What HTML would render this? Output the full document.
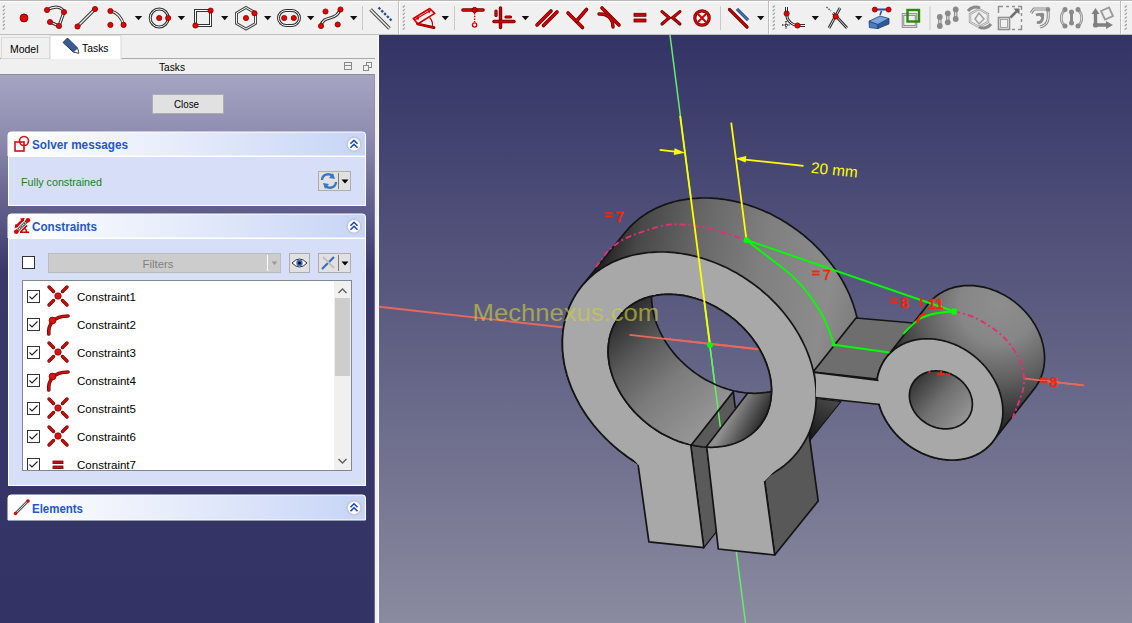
<!DOCTYPE html>
<html><head><meta charset="utf-8"><style>html,body{margin:0;padding:0;overflow:hidden;background:#f0f0f0}svg{display:block}</style></head>
<body><svg width="1132" height="623" viewBox="0 0 1132 623">
<defs>
<linearGradient id="taskg" x1="0" y1="74" x2="0" y2="623" gradientUnits="userSpaceOnUse">
<stop offset="0" stop-color="#a6a5c3"/><stop offset="0.11" stop-color="#8e8db0"/><stop offset="0.25" stop-color="#5e5c88"/><stop offset="0.36" stop-color="#3a3868"/><stop offset="1" stop-color="#333366"/>
</linearGradient>
<linearGradient id="hdrg" x1="0" y1="0" x2="1" y2="0">
<stop offset="0" stop-color="#ffffff"/><stop offset="0.45" stop-color="#e8edfb"/><stop offset="1" stop-color="#c6d4f6"/>
</linearGradient>
<linearGradient id="bgv" x1="0" y1="35" x2="0" y2="623" gradientUnits="userSpaceOnUse">
<stop offset="0" stop-color="#333366"/><stop offset="1" stop-color="#8a8aa0"/>
</linearGradient>
<linearGradient id="cylg" x1="585" y1="285" x2="860" y2="345" gradientUnits="userSpaceOnUse"><stop offset="0" stop-color="#141414"/><stop offset="0.06" stop-color="#2a2a2a"/><stop offset="0.15" stop-color="#484848"/><stop offset="0.35" stop-color="#666666"/><stop offset="0.6" stop-color="#808080"/><stop offset="0.85" stop-color="#8c8c8c"/><stop offset="1" stop-color="#7a7a7a"/></linearGradient>
<radialGradient id="cylg2" cx="998" cy="305" r="128" gradientUnits="userSpaceOnUse"><stop offset="0" stop-color="#8e8e8e"/><stop offset="0.3" stop-color="#868686"/><stop offset="0.6" stop-color="#5e5e5e"/><stop offset="0.85" stop-color="#353535"/><stop offset="1" stop-color="#222222"/></radialGradient>
<linearGradient id="inng" x1="612" y1="315" x2="710" y2="425" gradientUnits="userSpaceOnUse"><stop offset="0" stop-color="#262626"/><stop offset="0.3" stop-color="#585858"/><stop offset="0.6" stop-color="#7c7c7c"/><stop offset="1" stop-color="#969696"/></linearGradient>
<linearGradient id="inng2" x1="740" y1="396" x2="770" y2="412" gradientUnits="userSpaceOnUse"><stop offset="0" stop-color="#909090"/><stop offset="0.6" stop-color="#505050"/><stop offset="1" stop-color="#262626"/></linearGradient>
<linearGradient id="inng3" x1="912" y1="375" x2="968" y2="425" gradientUnits="userSpaceOnUse"><stop offset="0" stop-color="#2c2c2c"/><stop offset="0.5" stop-color="#707070"/><stop offset="1" stop-color="#9a9a9a"/></linearGradient>
<clipPath id="cE2"><path d="M648.2 424.3 L646.4 422.9 L644.6 421.4 L642.8 419.9 L641.1 418.3 L639.4 416.7 L637.7 415.1 L636.1 413.5 L634.5 411.8 L632.9 410.1 L631.4 408.4 L629.9 406.6 L628.5 404.8 L627.1 403.0 L625.8 401.2 L624.5 399.3 L623.2 397.5 L622.0 395.6 L620.8 393.7 L619.7 391.8 L618.6 389.8 L617.6 387.9 L616.6 385.9 L615.7 384.0 L614.8 382.0 L614.0 380.0 L613.2 378.0 L612.5 376.0 L611.9 374.0 L611.2 372.0 L610.7 370.0 L610.2 368.0 L609.7 366.0 L609.3 364.0 L609.0 362.0 L608.7 360.0 L608.5 358.1 L608.3 356.1 L608.2 354.1 L608.1 352.2 L608.1 350.2 L608.2 348.3 L608.3 346.4 L608.5 344.5 L608.7 342.7 L609.0 340.8 L609.3 339.0 L609.7 337.2 L610.1 335.4 L610.6 333.6 L611.2 331.9 L611.8 330.2 L612.4 328.5 L613.1 326.8 L613.9 325.2 L614.7 323.6 L615.6 322.1 L616.5 320.5 L617.5 319.0 L618.5 317.6 L619.5 316.2 L620.7 314.8 L621.8 313.4 L623.0 312.1 L624.3 310.9 L625.6 309.6 L626.9 308.5 L628.3 307.3 L629.7 306.2 L631.2 305.2 L632.7 304.2 L634.3 303.2 L635.8 302.3 L637.5 301.4 L639.1 300.6 L640.8 299.8 L642.5 299.1 L644.3 298.4 L646.1 297.8 L647.9 297.2 L649.8 296.7 L651.6 296.3 L653.5 295.8 L655.5 295.5 L657.4 295.1 L659.4 294.9 L661.4 294.7 L663.4 294.5 L665.4 294.4 L667.5 294.3 L669.6 294.3 L671.6 294.4 L673.7 294.5 L675.8 294.6 L677.9 294.8 L680.0 295.1 L682.2 295.4 L684.3 295.7 L686.4 296.2 L688.6 296.6 L690.7 297.1 L692.9 297.7 L695.0 298.3 L697.1 299.0 L699.2 299.7 L701.4 300.4 L703.5 301.3 L705.6 302.1 L707.7 303.0 L709.8 304.0 L711.8 305.0 L713.9 306.0 L715.9 307.1 L717.9 308.2 L719.9 309.4 L721.9 310.6 L723.8 311.9 L725.8 313.2 L727.7 314.5 L729.6 315.9 L731.4 317.3 L733.2 318.7 L735.0 320.2 L736.8 321.7 L738.5 323.3 L740.2 324.9 L741.9 326.5 L743.5 328.1 L745.1 329.8 L746.7 331.5 L748.2 333.2 L749.7 335.0 L751.1 336.8 L752.5 338.6 L753.8 340.4 L755.1 342.3 L756.4 344.1 L757.6 346.0 L758.8 347.9 L759.9 349.8 L761.0 351.8 L762.0 353.7 L763.0 355.7 L763.9 357.6 L764.8 359.6 L765.6 361.6 L766.4 363.6 L767.1 365.6 L767.7 367.6 L768.4 369.6 L768.9 371.6 L769.4 373.6 L769.9 375.6 L770.3 377.6 L770.6 379.6 L770.9 381.6 L771.1 383.5 L771.3 385.5 L771.4 387.5 L771.5 389.4 L771.5 391.4 L771.4 393.3 L771.3 395.2 L771.1 397.1 L770.9 398.9 L770.6 400.8 L770.3 402.6 L769.9 404.4 L769.5 406.2 L769.0 408.0 L768.4 409.7 L767.8 411.4 L767.2 413.1 L766.5 414.8 L765.7 416.4 L764.9 418.0 L764.0 419.5 L763.1 421.1 L762.1 422.6 L761.1 424.0 L760.1 425.4 L758.9 426.8 L757.8 428.2 L756.6 429.5 L755.3 430.7 L754.0 432.0 L752.7 433.1 L751.3 434.3 L749.9 435.4 L748.4 436.4 L746.9 437.4 L745.3 438.4 L743.8 439.3 L742.1 440.2 L740.5 441.0 L738.8 441.8 L737.1 442.5 L735.3 443.2 L733.5 443.8 L731.7 444.4 L729.8 444.9 L728.0 445.3 L726.1 445.8 L724.1 446.1 L722.2 446.5 L720.2 446.7 L718.2 446.9 L716.2 447.1 L714.2 447.2 L712.1 447.3 L710.0 447.3 L708.0 447.2 L705.9 447.1 L703.8 447.0 L701.7 446.8 L699.6 446.5 L697.4 446.2 L695.3 445.9 L693.2 445.4 L691.0 445.0 L688.9 444.5 L686.7 443.9 L684.6 443.3 L682.5 442.6 L680.4 441.9 L678.2 441.2 L676.1 440.3 L674.0 439.5 L671.9 438.6 L669.8 437.6 L667.8 436.6 L665.7 435.6 L663.7 434.5 L661.7 433.4 L659.7 432.2 L657.7 431.0 L655.8 429.7 L653.8 428.4 L651.9 427.1 L650.0 425.7 Z"/></clipPath>
<clipPath id="cE4"><path d="M691.7 370.3 L689.9 368.9 L688.1 367.4 L686.3 365.9 L684.6 364.3 L682.9 362.7 L681.2 361.1 L679.6 359.5 L678.0 357.8 L676.4 356.1 L674.9 354.4 L673.4 352.6 L672.0 350.8 L670.6 349.0 L669.3 347.2 L668.0 345.3 L666.7 343.5 L665.5 341.6 L664.3 339.7 L663.2 337.8 L662.1 335.8 L661.1 333.9 L660.1 331.9 L659.2 330.0 L658.3 328.0 L657.5 326.0 L656.7 324.0 L656.0 322.0 L655.4 320.0 L654.7 318.0 L654.2 316.0 L653.7 314.0 L653.2 312.0 L652.8 310.0 L652.5 308.0 L652.2 306.0 L652.0 304.1 L651.8 302.1 L651.7 300.1 L651.6 298.2 L651.6 296.2 L651.7 294.3 L651.8 292.4 L652.0 290.5 L652.2 288.7 L652.5 286.8 L652.8 285.0 L653.2 283.2 L653.6 281.4 L654.1 279.6 L654.7 277.9 L655.3 276.2 L655.9 274.5 L656.6 272.8 L657.4 271.2 L658.2 269.6 L659.1 268.1 L660.0 266.5 L661.0 265.0 L662.0 263.6 L663.0 262.2 L664.2 260.8 L665.3 259.4 L666.5 258.1 L667.8 256.9 L669.1 255.6 L670.4 254.5 L671.8 253.3 L673.2 252.2 L674.7 251.2 L676.2 250.2 L677.8 249.2 L679.3 248.3 L681.0 247.4 L682.6 246.6 L684.3 245.8 L686.0 245.1 L687.8 244.4 L689.6 243.8 L691.4 243.2 L693.3 242.7 L695.1 242.3 L697.0 241.8 L699.0 241.5 L700.9 241.1 L702.9 240.9 L704.9 240.7 L706.9 240.5 L708.9 240.4 L711.0 240.3 L713.1 240.3 L715.1 240.4 L717.2 240.5 L719.3 240.6 L721.4 240.8 L723.5 241.1 L725.7 241.4 L727.8 241.7 L729.9 242.2 L732.1 242.6 L734.2 243.1 L736.4 243.7 L738.5 244.3 L740.6 245.0 L742.7 245.7 L744.9 246.4 L747.0 247.3 L749.1 248.1 L751.2 249.0 L753.3 250.0 L755.3 251.0 L757.4 252.0 L759.4 253.1 L761.4 254.2 L763.4 255.4 L765.4 256.6 L767.3 257.9 L769.3 259.2 L771.2 260.5 L773.1 261.9 L774.9 263.3 L776.7 264.7 L778.5 266.2 L780.3 267.7 L782.0 269.3 L783.7 270.9 L785.4 272.5 L787.0 274.1 L788.6 275.8 L790.2 277.5 L791.7 279.2 L793.2 281.0 L794.6 282.8 L796.0 284.6 L797.3 286.4 L798.6 288.3 L799.9 290.1 L801.1 292.0 L802.3 293.9 L803.4 295.8 L804.5 297.8 L805.5 299.7 L806.5 301.7 L807.4 303.6 L808.3 305.6 L809.1 307.6 L809.9 309.6 L810.6 311.6 L811.2 313.6 L811.9 315.6 L812.4 317.6 L812.9 319.6 L813.4 321.6 L813.8 323.6 L814.1 325.6 L814.4 327.6 L814.6 329.5 L814.8 331.5 L814.9 333.5 L815.0 335.4 L815.0 337.4 L814.9 339.3 L814.8 341.2 L814.6 343.1 L814.4 344.9 L814.1 346.8 L813.8 348.6 L813.4 350.4 L813.0 352.2 L812.5 354.0 L811.9 355.7 L811.3 357.4 L810.7 359.1 L810.0 360.8 L809.2 362.4 L808.4 364.0 L807.5 365.5 L806.6 367.1 L805.6 368.6 L804.6 370.0 L803.6 371.4 L802.4 372.8 L801.3 374.2 L800.1 375.5 L798.8 376.7 L797.5 378.0 L796.2 379.1 L794.8 380.3 L793.4 381.4 L791.9 382.4 L790.4 383.4 L788.8 384.4 L787.3 385.3 L785.6 386.2 L784.0 387.0 L782.3 387.8 L780.6 388.5 L778.8 389.2 L777.0 389.8 L775.2 390.4 L773.3 390.9 L771.5 391.3 L769.6 391.8 L767.6 392.1 L765.7 392.5 L763.7 392.7 L761.7 392.9 L759.7 393.1 L757.7 393.2 L755.6 393.3 L753.5 393.3 L751.5 393.2 L749.4 393.1 L747.3 393.0 L745.2 392.8 L743.1 392.5 L740.9 392.2 L738.8 391.9 L736.7 391.4 L734.5 391.0 L732.4 390.5 L730.2 389.9 L728.1 389.3 L726.0 388.6 L723.9 387.9 L721.7 387.2 L719.6 386.3 L717.5 385.5 L715.4 384.6 L713.3 383.6 L711.3 382.6 L709.2 381.6 L707.2 380.5 L705.2 379.4 L703.2 378.2 L701.2 377.0 L699.3 375.7 L697.3 374.4 L695.4 373.1 L693.5 371.7 Z"/></clipPath>
<clipPath id="cE6"><path d="M926.9 423.7 L926.2 423.3 L925.5 422.8 L924.8 422.3 L924.1 421.8 L923.4 421.3 L922.7 420.8 L922.0 420.3 L921.4 419.7 L920.7 419.2 L920.1 418.6 L919.5 418.0 L918.9 417.4 L918.3 416.8 L917.8 416.2 L917.2 415.6 L916.7 414.9 L916.2 414.3 L915.7 413.6 L915.2 412.9 L914.7 412.2 L914.3 411.6 L913.8 410.9 L913.4 410.1 L913.0 409.4 L912.6 408.7 L912.3 408.0 L912.0 407.3 L911.6 406.5 L911.4 405.8 L911.1 405.0 L910.8 404.3 L910.6 403.5 L910.4 402.8 L910.2 402.0 L910.0 401.3 L909.9 400.5 L909.7 399.7 L909.6 399.0 L909.6 398.2 L909.5 397.5 L909.4 396.7 L909.4 396.0 L909.4 395.2 L909.5 394.5 L909.5 393.7 L909.6 393.0 L909.7 392.2 L909.8 391.5 L909.9 390.8 L910.0 390.1 L910.2 389.4 L910.4 388.7 L910.6 388.0 L910.9 387.3 L911.1 386.6 L911.4 385.9 L911.7 385.3 L912.0 384.6 L912.3 384.0 L912.7 383.4 L913.1 382.7 L913.5 382.1 L913.9 381.5 L914.3 381.0 L914.8 380.4 L915.2 379.8 L915.7 379.3 L916.2 378.8 L916.7 378.3 L917.3 377.8 L917.8 377.3 L918.4 376.8 L919.0 376.4 L919.6 375.9 L920.2 375.5 L920.8 375.1 L921.5 374.7 L922.1 374.3 L922.8 374.0 L923.5 373.7 L924.1 373.4 L924.9 373.1 L925.6 372.8 L926.3 372.5 L927.0 372.3 L927.8 372.1 L928.5 371.9 L929.3 371.7 L930.1 371.5 L930.8 371.4 L931.6 371.2 L932.4 371.1 L933.2 371.1 L934.0 371.0 L934.8 370.9 L935.6 370.9 L936.4 370.9 L937.3 370.9 L938.1 371.0 L938.9 371.0 L939.7 371.1 L940.5 371.2 L941.4 371.3 L942.2 371.4 L943.0 371.6 L943.8 371.7 L944.7 371.9 L945.5 372.1 L946.3 372.4 L947.1 372.6 L947.9 372.9 L948.7 373.2 L949.5 373.5 L950.3 373.8 L951.1 374.1 L951.8 374.5 L952.6 374.9 L953.4 375.3 L954.1 375.7 L954.9 376.1 L955.6 376.5 L956.3 377.0 L957.0 377.5 L957.7 378.0 L958.4 378.5 L959.1 379.0 L959.8 379.5 L960.4 380.1 L961.1 380.6 L961.7 381.2 L962.3 381.8 L962.9 382.4 L963.5 383.0 L964.0 383.6 L964.6 384.2 L965.1 384.9 L965.6 385.5 L966.1 386.2 L966.6 386.9 L967.1 387.6 L967.5 388.2 L968.0 388.9 L968.4 389.7 L968.8 390.4 L969.2 391.1 L969.5 391.8 L969.8 392.5 L970.2 393.3 L970.4 394.0 L970.7 394.8 L971.0 395.5 L971.2 396.3 L971.4 397.0 L971.6 397.8 L971.8 398.5 L971.9 399.3 L972.1 400.1 L972.2 400.8 L972.2 401.6 L972.3 402.3 L972.4 403.1 L972.4 403.8 L972.4 404.6 L972.3 405.3 L972.3 406.1 L972.2 406.8 L972.1 407.6 L972.0 408.3 L971.9 409.0 L971.8 409.7 L971.6 410.4 L971.4 411.1 L971.2 411.8 L970.9 412.5 L970.7 413.2 L970.4 413.9 L970.1 414.5 L969.8 415.2 L969.5 415.8 L969.1 416.4 L968.7 417.1 L968.3 417.7 L967.9 418.3 L967.5 418.8 L967.0 419.4 L966.6 420.0 L966.1 420.5 L965.6 421.0 L965.1 421.5 L964.5 422.0 L964.0 422.5 L963.4 423.0 L962.8 423.4 L962.2 423.9 L961.6 424.3 L961.0 424.7 L960.3 425.1 L959.7 425.5 L959.0 425.8 L958.3 426.1 L957.7 426.4 L956.9 426.7 L956.2 427.0 L955.5 427.3 L954.8 427.5 L954.0 427.7 L953.3 427.9 L952.5 428.1 L951.7 428.3 L951.0 428.4 L950.2 428.6 L949.4 428.7 L948.6 428.7 L947.8 428.8 L947.0 428.9 L946.2 428.9 L945.4 428.9 L944.5 428.9 L943.7 428.8 L942.9 428.8 L942.1 428.7 L941.3 428.6 L940.4 428.5 L939.6 428.4 L938.8 428.2 L938.0 428.1 L937.1 427.9 L936.3 427.7 L935.5 427.4 L934.7 427.2 L933.9 426.9 L933.1 426.6 L932.3 426.3 L931.5 426.0 L930.7 425.7 L930.0 425.3 L929.2 424.9 L928.4 424.5 L927.7 424.1 Z"/></clipPath>
<clipPath id="cvp"><rect x="379" y="35" width="753" height="588"/></clipPath>
</defs>
<rect x="0" y="0" width="1132" height="35" fill="#f0f0f0"/>
<rect x="0" y="0" width="1132" height="1" fill="#b8b8b8"/><rect x="0" y="1" width="1132" height="1" fill="#ffffff"/>
<rect x="0" y="34" width="1132" height="1" fill="#bfbfbf"/>
<rect x="398" y="1" width="1" height="33" fill="#bdbdbd"/><rect x="399" y="1" width="1" height="33" fill="#ffffff"/>
<rect x="768" y="1" width="1" height="33" fill="#bdbdbd"/><rect x="769" y="1" width="1" height="33" fill="#ffffff"/>
<rect x="1120" y="1" width="1" height="33" fill="#bdbdbd"/><rect x="1121" y="1" width="1" height="33" fill="#ffffff"/>
<path d="M2.8 7.5 L4.8 5.5" stroke="#a0a0a0" stroke-width="1.2"/><path d="M2.8 11.2 L4.8 9.2" stroke="#a0a0a0" stroke-width="1.2"/><path d="M2.8 14.9 L4.8 12.9" stroke="#a0a0a0" stroke-width="1.2"/><path d="M2.8 18.6 L4.8 16.6" stroke="#a0a0a0" stroke-width="1.2"/><path d="M2.8 22.3 L4.8 20.3" stroke="#a0a0a0" stroke-width="1.2"/><path d="M2.8 26.0 L4.8 24.0" stroke="#a0a0a0" stroke-width="1.2"/><path d="M2.8 29.700000000000003 L4.8 27.700000000000003" stroke="#a0a0a0" stroke-width="1.2"/>
<path d="M402.8 7.5 L404.8 5.5" stroke="#a0a0a0" stroke-width="1.2"/><path d="M402.8 11.2 L404.8 9.2" stroke="#a0a0a0" stroke-width="1.2"/><path d="M402.8 14.9 L404.8 12.9" stroke="#a0a0a0" stroke-width="1.2"/><path d="M402.8 18.6 L404.8 16.6" stroke="#a0a0a0" stroke-width="1.2"/><path d="M402.8 22.3 L404.8 20.3" stroke="#a0a0a0" stroke-width="1.2"/><path d="M402.8 26.0 L404.8 24.0" stroke="#a0a0a0" stroke-width="1.2"/><path d="M402.8 29.700000000000003 L404.8 27.700000000000003" stroke="#a0a0a0" stroke-width="1.2"/>
<path d="M772.8 7.5 L774.8 5.5" stroke="#a0a0a0" stroke-width="1.2"/><path d="M772.8 11.2 L774.8 9.2" stroke="#a0a0a0" stroke-width="1.2"/><path d="M772.8 14.9 L774.8 12.9" stroke="#a0a0a0" stroke-width="1.2"/><path d="M772.8 18.6 L774.8 16.6" stroke="#a0a0a0" stroke-width="1.2"/><path d="M772.8 22.3 L774.8 20.3" stroke="#a0a0a0" stroke-width="1.2"/><path d="M772.8 26.0 L774.8 24.0" stroke="#a0a0a0" stroke-width="1.2"/><path d="M772.8 29.700000000000003 L774.8 27.700000000000003" stroke="#a0a0a0" stroke-width="1.2"/>
<path d="M1124.8 7.5 L1126.8 5.5" stroke="#a0a0a0" stroke-width="1.2"/><path d="M1124.8 11.2 L1126.8 9.2" stroke="#a0a0a0" stroke-width="1.2"/><path d="M1124.8 14.9 L1126.8 12.9" stroke="#a0a0a0" stroke-width="1.2"/><path d="M1124.8 18.6 L1126.8 16.6" stroke="#a0a0a0" stroke-width="1.2"/><path d="M1124.8 22.3 L1126.8 20.3" stroke="#a0a0a0" stroke-width="1.2"/><path d="M1124.8 26.0 L1126.8 24.0" stroke="#a0a0a0" stroke-width="1.2"/><path d="M1124.8 29.700000000000003 L1126.8 27.700000000000003" stroke="#a0a0a0" stroke-width="1.2"/>
<circle cx="24" cy="18" r="4" fill="#e00000" stroke="#900000" stroke-width="0.8"/>
<path d="M47 10 C55 5 62 7 64 12 L59 26 L50 22" fill="none" stroke="#303030" stroke-width="3.2" stroke-linecap="butt"/><path d="M47 10 C55 5 62 7 64 12 L59 26 L50 22" fill="none" stroke="#f4f4f4" stroke-width="1.2000000000000002"/>
<circle cx="47" cy="10" r="2.6" fill="#e00000" stroke="#8a0000" stroke-width="0.8"/><circle cx="64" cy="12" r="2.6" fill="#e00000" stroke="#8a0000" stroke-width="0.8"/><circle cx="59" cy="26" r="2.6" fill="#e00000" stroke="#8a0000" stroke-width="0.8"/><circle cx="50" cy="22" r="2.6" fill="#e00000" stroke="#8a0000" stroke-width="0.8"/>
<path d="M77.5 26.5 L95 9" fill="none" stroke="#303030" stroke-width="3.2" stroke-linecap="butt"/><path d="M77.5 26.5 L95 9" fill="none" stroke="#f4f4f4" stroke-width="1.2000000000000002"/>
<circle cx="77.5" cy="26.5" r="2.6" fill="#e00000" stroke="#8a0000" stroke-width="0.8"/><circle cx="95" cy="9" r="2.6" fill="#e00000" stroke="#8a0000" stroke-width="0.8"/>
<path d="M110.4 11 C117 12 122 18 123.6 25" fill="none" stroke="#303030" stroke-width="3.2" stroke-linecap="butt"/><path d="M110.4 11 C117 12 122 18 123.6 25" fill="none" stroke="#f4f4f4" stroke-width="1.2000000000000002"/>
<circle cx="110.4" cy="11" r="2.6" fill="#e00000" stroke="#8a0000" stroke-width="0.8"/><circle cx="110.4" cy="24.9" r="2.6" fill="#e00000" stroke="#8a0000" stroke-width="0.8"/><circle cx="123.6" cy="24.9" r="2.6" fill="#e00000" stroke="#8a0000" stroke-width="0.8"/>
<path d="M134.8 16 h7.4 l-3.7 4.2 z" fill="#101010"/>
<circle cx="159.2" cy="18" r="9" fill="none" stroke="#303030" stroke-width="3"/><circle cx="159.2" cy="18" r="9" fill="none" stroke="#f4f4f4" stroke-width="1"/>
<circle cx="159.2" cy="18" r="2.6" fill="#e00000" stroke="#8a0000" stroke-width="0.8"/><circle cx="168.2" cy="18" r="2.6" fill="#e00000" stroke="#8a0000" stroke-width="0.8"/>
<path d="M177.7 16 h7.4 l-3.7 4.2 z" fill="#101010"/>
<rect x="194.5" y="9.5" width="17" height="17" fill="none" stroke="#333" stroke-width="1"/><rect x="196.5" y="11.5" width="13" height="13" fill="none" stroke="#333" stroke-width="1"/><rect x="195.5" y="10.5" width="15" height="15" fill="none" stroke="#fafafa" stroke-width="1"/>
<circle cx="210.6" cy="10.6" r="2.6" fill="#e00000" stroke="#8a0000" stroke-width="0.8"/><circle cx="195.4" cy="25.5" r="2.6" fill="#e00000" stroke="#8a0000" stroke-width="0.8"/>
<path d="M221 16 h7.4 l-3.7 4.2 z" fill="#101010"/>
<path d="M246 7.5 L255.5 13 L255.5 23.5 L246 29 L236.5 23.5 L236.5 13 Z" fill="none" stroke="#484848" stroke-width="3"/><path d="M246 7.5 L255.5 13 L255.5 23.5 L246 29 L236.5 23.5 L236.5 13 Z" fill="none" stroke="#f4f4f4" stroke-width="1"/>
<circle cx="246" cy="18" r="2.6" fill="#e00000" stroke="#8a0000" stroke-width="0.8"/><circle cx="254.5" cy="13.3" r="2.6" fill="#e00000" stroke="#8a0000" stroke-width="0.8"/>
<path d="M264 16 h7.4 l-3.7 4.2 z" fill="#101010"/>
<rect x="278.5" y="10.5" width="21" height="15" rx="7.5" fill="none" stroke="#303030" stroke-width="3"/><rect x="278.5" y="10.5" width="21" height="15" rx="7.5" fill="none" stroke="#f4f4f4" stroke-width="1"/>
<circle cx="284.2" cy="18" r="2.6" fill="#e00000" stroke="#8a0000" stroke-width="0.8"/><circle cx="293.8" cy="18" r="2.6" fill="#e00000" stroke="#8a0000" stroke-width="0.8"/>
<path d="M307 16 h7.4 l-3.7 4.2 z" fill="#101010"/>
<path d="M321 26 C322 20 326 19 330 18 C334 17 339 15 340 9" fill="none" stroke="#303030" stroke-width="3.2" stroke-linecap="butt"/><path d="M321 26 C322 20 326 19 330 18 C334 17 339 15 340 9" fill="none" stroke="#f4f4f4" stroke-width="1.2000000000000002"/>
<circle cx="340.5" cy="9.5" r="2.6" fill="#e00000" stroke="#8a0000" stroke-width="0.8"/><circle cx="337.7" cy="24.5" r="2.6" fill="#e00000" stroke="#8a0000" stroke-width="0.8"/><circle cx="321" cy="26" r="2.6" fill="#e00000" stroke="#8a0000" stroke-width="0.8"/><circle cx="325.5" cy="11.5" r="2.6" fill="#e00000" stroke="#8a0000" stroke-width="0.8"/>
<path d="M350 16 h7.4 l-3.7 4.2 z" fill="#101010"/>
<rect x="362" y="6" width="1" height="24" fill="#c8c8c8"/>
<path d="M370.5 9.5 L389.5 28.5" stroke="#404040" stroke-width="3.4"/><path d="M370.5 9.5 L389.5 28.5" stroke="#f4f4f4" stroke-width="1.4"/>
<path d="M378.5 7.5 L391.5 20.5" stroke="#2b4e8c" stroke-width="2.4" stroke-dasharray="2.5 1.5"/>
<path d="M413.4 18.4 L429.7 8.5 L434.7 13.4 L417.7 24 Z" fill="none" stroke="#d40000" stroke-width="1.7" stroke-linejoin="round"/>
<path d="M416 19 L430 10.8" stroke="#d40000" stroke-width="1.1"/><path d="M414.5 19.8 L418.5 16 L419 19.5 Z M431.5 10 L427.5 10.4 L429 13.5 Z" fill="#d40000"/>
<path d="M417.7 24 L434 27.6" stroke="#6a0000" stroke-width="2.8" stroke-linecap="round"/><path d="M417.7 24 L434 27.6" stroke="#d40000" stroke-width="1.6" stroke-linecap="round"/>
<path d="M429.5 17.5 Q433 21 432.5 26" fill="none" stroke="#d40000" stroke-width="1.2"/>
<path d="M441.6 16 h7.4 l-3.7 4.2 z" fill="#101010"/>
<rect x="454" y="6" width="1" height="24" fill="#c8c8c8"/>
<path d="M463 10 L483 10" fill="none" stroke="#6a0000" stroke-width="3.6" stroke-linecap="round"/><path d="M463 10 L483 10" fill="none" stroke="#d40000" stroke-width="2.0" stroke-linecap="round"/><circle cx="474.6" cy="10" r="2.6" fill="#d40000" stroke="#6a0000"/><path d="M474.6 13 V22" stroke="#d40000" stroke-width="1.4" stroke-dasharray="1.5 1.2"/><circle cx="474.6" cy="25" r="2.1" fill="#fff" stroke="#d40000" stroke-width="1.4"/>
<path d="M500.5 8 V27.5" fill="none" stroke="#6a0000" stroke-width="3.4" stroke-linecap="round"/><path d="M500.5 8 V27.5" fill="none" stroke="#d40000" stroke-width="1.7999999999999998" stroke-linecap="round"/><path d="M494 21.5 H514" fill="none" stroke="#6a0000" stroke-width="3.4" stroke-linecap="round"/><path d="M494 21.5 H514" fill="none" stroke="#d40000" stroke-width="1.7999999999999998" stroke-linecap="round"/><path d="M496 11 V15.5" fill="none" stroke="#6a0000" stroke-width="3.2" stroke-linecap="round"/><path d="M496 11 V15.5" fill="none" stroke="#d40000" stroke-width="1.6" stroke-linecap="round"/><path d="M506 17 H510.5" fill="none" stroke="#6a0000" stroke-width="3.2" stroke-linecap="round"/><path d="M506 17 H510.5" fill="none" stroke="#d40000" stroke-width="1.6" stroke-linecap="round"/>
<path d="M521.7 16 h7.4 l-3.7 4.2 z" fill="#101010"/>
<path d="M537 25 L551 11" fill="none" stroke="#6a0000" stroke-width="3.6" stroke-linecap="round"/><path d="M537 25 L551 11" fill="none" stroke="#d40000" stroke-width="2.0" stroke-linecap="round"/><path d="M543.5 25.5 L557 12" fill="none" stroke="#6a0000" stroke-width="3.6" stroke-linecap="round"/><path d="M543.5 25.5 L557 12" fill="none" stroke="#d40000" stroke-width="2.0" stroke-linecap="round"/>
<path d="M568 13 L582.5 27.5" fill="none" stroke="#6a0000" stroke-width="3.6" stroke-linecap="round"/><path d="M568 13 L582.5 27.5" fill="none" stroke="#d40000" stroke-width="2.0" stroke-linecap="round"/><path d="M576.5 21 L586.5 9.5" fill="none" stroke="#6a0000" stroke-width="3.6" stroke-linecap="round"/><path d="M576.5 21 L586.5 9.5" fill="none" stroke="#d40000" stroke-width="2.0" stroke-linecap="round"/>
<path d="M602 8 L619 25" fill="none" stroke="#6a0000" stroke-width="3.6" stroke-linecap="round"/><path d="M602 8 L619 25" fill="none" stroke="#d40000" stroke-width="2.0" stroke-linecap="round"/><path d="M599 14 C606 13.5 613 17 613 27" fill="none" stroke="#6a0000" stroke-width="3.4" stroke-linecap="round"/><path d="M599 14 C606 13.5 613 17 613 27" fill="none" stroke="#d40000" stroke-width="1.7999999999999998" stroke-linecap="round"/>
<rect x="634" y="13.3" width="12" height="3" fill="#d40000" stroke="#6a0000" stroke-width="0.8"/><rect x="634" y="19" width="12" height="3" fill="#d40000" stroke="#6a0000" stroke-width="0.8"/>
<path d="M662 11.6 L669.2 17.8 L662 24" fill="none" stroke="#6a0000" stroke-width="3.2" stroke-linecap="round"/><path d="M662 11.6 L669.2 17.8 L662 24" fill="none" stroke="#d40000" stroke-width="1.6" stroke-linecap="round"/><path d="M679.9 11.6 L672.6 17.8 L679.9 24" fill="none" stroke="#6a0000" stroke-width="3.2" stroke-linecap="round"/><path d="M679.9 11.6 L672.6 17.8 L679.9 24" fill="none" stroke="#d40000" stroke-width="1.6" stroke-linecap="round"/>
<circle cx="702" cy="18" r="7.2" fill="#fff" stroke="#6a0000" stroke-width="3.2"/><circle cx="702" cy="18" r="7.2" fill="none" stroke="#d40000" stroke-width="1.8"/><path d="M698 14 L706 22 M706 14 L698 22" stroke="#d40000" stroke-width="2"/>
<rect x="720" y="6" width="1" height="24" fill="#c8c8c8"/>
<path d="M729.5 9.5 L747 27" fill="none" stroke="#6a0000" stroke-width="3.2" stroke-linecap="round"/><path d="M729.5 9.5 L747 27" fill="none" stroke="#d40000" stroke-width="1.6" stroke-linecap="round"/><path d="M737 9 L748 20" stroke="#0d2a5a" stroke-width="3"/><path d="M737 9 L748 20" stroke="#4a7cc8" stroke-width="1.6"/>
<path d="M757 16 h7.4 l-3.7 4.2 z" fill="#101010"/>
<path d="M786.5 7 V13 C786.5 21 792 25.5 799 25.5 H805" fill="none" stroke="#303030" stroke-width="3" stroke-linecap="butt"/><path d="M786.5 7 V13 C786.5 21 792 25.5 799 25.5 H805" fill="none" stroke="#f4f4f4" stroke-width="1"/>
<circle cx="786.6" cy="13.5" r="2.6" fill="#e00000" stroke="#8a0000" stroke-width="0.8"/><circle cx="797.5" cy="25.5" r="2.6" fill="#e00000" stroke="#8a0000" stroke-width="0.8"/>
<path d="M782 25 H790 M786 21 V29" stroke="#333" stroke-width="1.6" stroke-dasharray="1.5 1"/>
<path d="M811.6 16 h7.4 l-3.7 4.2 z" fill="#101010"/>
<path d="M840 8 L829 28" fill="none" stroke="#303030" stroke-width="2.8" stroke-linecap="butt"/><path d="M840 8 L829 28" fill="none" stroke="#f4f4f4" stroke-width="0.7999999999999998"/><path d="M833 13 L847 28" fill="none" stroke="#303030" stroke-width="2.8" stroke-linecap="butt"/><path d="M833 13 L847 28" fill="none" stroke="#f4f4f4" stroke-width="0.7999999999999998"/><path d="M826.5 7 L831 11" stroke="#555" stroke-width="1.5" stroke-dasharray="1.5 1.2"/>
<circle cx="835.7" cy="16.5" r="2.6" fill="#e00000" stroke="#8a0000" stroke-width="0.8"/>
<path d="M855 16 h7.4 l-3.7 4.2 z" fill="#101010"/>
<path d="M869 21.2 L877.9 24.4 L877.9 28.6 L869.4 27.6 Z" fill="#4a7cc0" stroke="#1b3d73" stroke-width="0.8" stroke-linejoin="round"/>
<path d="M877.9 24.4 L889 18.5 L889 23.9 L877.9 28.6 Z" fill="#2f5a9a" stroke="#1b3d73" stroke-width="0.8" stroke-linejoin="round"/>
<path d="M869 21.2 L880 16 L889 18.5 L877.9 24.4 Z" fill="#78a6e0" stroke="#1b3d73" stroke-width="0.8" stroke-linejoin="round"/>
<path d="M876.3 9.5 H888.5" stroke="#1e4f9a" stroke-width="2"/><path d="M881.5 11 L880 15" stroke="#1e4f9a" stroke-width="1.6"/><circle cx="874.8" cy="9.6" r="2.5" fill="#e00000" stroke="#8a0000" stroke-width="0.8"/><circle cx="888.6" cy="9.6" r="2.5" fill="#e00000" stroke="#8a0000" stroke-width="0.8"/>
<rect x="903" y="14.5" width="13" height="12" fill="none" stroke="#6e6e6e" stroke-width="2.4"/><rect x="903" y="14.5" width="13" height="12" fill="none" stroke="#f4f4f4" stroke-width="0.8"/><rect x="907.5" y="10" width="11.5" height="11.5" fill="none" stroke="#2a8a0a" stroke-width="2.4"/>
<rect x="929.5" y="6" width="1" height="24" fill="#c8c8c8"/>
<path d="M939.8 17 V26" stroke="#8a8a8a" stroke-width="3.4"/><path d="M939.8 19 V24" stroke="#e8e8e8" stroke-width="1.2"/>
<circle cx="939.8" cy="17" r="2.9" fill="#8a8a8a"/><circle cx="939.8" cy="26" r="2.9" fill="#8a8a8a"/>
<path d="M947.8 13.3 V22.3" stroke="#8a8a8a" stroke-width="3.4"/><path d="M947.8 15.3 V20.3" stroke="#e8e8e8" stroke-width="1.2"/>
<circle cx="947.8" cy="13.3" r="2.9" fill="#8a8a8a"/><circle cx="947.8" cy="22.3" r="2.9" fill="#8a8a8a"/>
<path d="M955.7 9.5 V19" stroke="#8a8a8a" stroke-width="3.4"/><path d="M955.7 11.5 V17" stroke="#e8e8e8" stroke-width="1.2"/>
<circle cx="955.7" cy="9.5" r="2.9" fill="#8a8a8a"/><circle cx="955.7" cy="19" r="2.9" fill="#8a8a8a"/>
<path d="M970 22 L970 14 L979 9 L988 14 L988 22 L979 27 Z" fill="none" stroke="#a0a0a0" stroke-width="2.4"/><path d="M970 22 L970 14 L979 9 L988 14 L988 22 L979 27 Z" fill="none" stroke="#f0f0f0" stroke-width="0.8"/><path d="M975 19 L979 13 L984 19 L979 24 Z" fill="none" stroke="#a0a0a0" stroke-width="1.5"/><path d="M968 11 C971 7 976 6 980 8" stroke="#8a8a8a" stroke-width="3" fill="none"/><path d="M991 24 C988 28 983 29 979 27" stroke="#8a8a8a" stroke-width="3" fill="none"/>
<path d="M998.5 13 V6.5 H1003 M1006 6.5 H1009 M1012 6.5 H1015 M1018 6.5 H1021.5 V10 M1021.5 13 V16 M1021.5 19 V22 M1021.5 25 V29.5 H1018 M1015 29.5 H1012" stroke="#909090" stroke-width="1.4" fill="none"/><rect x="998.5" y="17.5" width="11" height="12" fill="none" stroke="#909090" stroke-width="1.6"/><rect x="1000.5" y="19.5" width="7" height="8" fill="none" stroke="#909090" stroke-width="0.8"/><path d="M1010.5 17.5 L1018 10" stroke="#707070" stroke-width="2.6" fill="none"/><path d="M1013.5 8.5 L1019.5 8.5 L1019.5 14.5 Z" fill="#707070"/>
<path d="M1031 13 L1034 9 H1048 C1049 20 1048 25 1040 27" stroke="#8a8a8a" stroke-width="3" fill="none"/><path d="M1031 13 L1034 9 H1048 C1049 20 1048 25 1040 27" stroke="#f4f4f4" stroke-width="1" fill="none"/><path d="M1036 15 C1041 13 1044 16 1042 20 C1041 22 1039 23 1037 22" stroke="#8a8a8a" stroke-width="2.8" fill="none"/><circle cx="1048" cy="9.5" r="2.3" fill="#8a8a8a"/><circle cx="1042" cy="15" r="2.3" fill="#8a8a8a"/>
<path d="M1065 10 C1060 14 1060 22 1065 26 M1078 10 C1083 14 1083 22 1078 26" stroke="#8a8a8a" stroke-width="2.6" fill="none"/><path d="M1065 10 C1060 14 1060 22 1065 26 M1078 10 C1083 14 1083 22 1078 26" stroke="#f4f4f4" stroke-width="0.8" fill="none"/><path d="M1071.5 12 V23" stroke="#8a8a8a" stroke-width="3"/>
<circle cx="1065" cy="9.5" r="2.5" fill="#8a8a8a"/>
<circle cx="1065" cy="26" r="2.5" fill="#8a8a8a"/>
<circle cx="1078" cy="9.5" r="2.5" fill="#8a8a8a"/>
<circle cx="1078" cy="26" r="2.5" fill="#8a8a8a"/>
<circle cx="1071.5" cy="12" r="2.5" fill="#8a8a8a"/>
<circle cx="1071.5" cy="23" r="2.5" fill="#8a8a8a"/>
<path d="M1095.5 25 V11 M1095.5 25 H1109" stroke="#808080" stroke-width="3.4" fill="none"/><path d="M1091.5 14 L1095.5 8 L1099.5 14 Z M1106 21 L1113 25 L1106 29 Z" fill="#808080"/><circle cx="1095.5" cy="25" r="2.6" fill="#808080"/><path d="M1101 11 L1109 7.5 L1113 16 L1105 19.5 Z" fill="none" stroke="#9a9a9a" stroke-width="1.8"/><rect x="0" y="35" width="379" height="588" fill="#f0f0f0"/>
<rect x="378" y="35" width="1" height="588" fill="#ffffff"/>
<rect x="0" y="58" width="375" height="1" fill="#a9a9a9"/>
<rect x="1.5" y="37.5" width="48" height="21" fill="#f0f0f0" stroke="#d9d9d9" stroke-width="1"/>
<rect x="50" y="35" width="71" height="24" fill="#ffffff"/><path d="M50 59 V35.5 H121 V59" fill="none" stroke="#d9d9d9" stroke-width="1"/>
<text x="10" y="52.5" font-family="Liberation Sans, sans-serif" font-size="11" fill="#000" font-weight="normal" text-anchor="start" textLength="28.5" lengthAdjust="spacingAndGlyphs">Model</text>
<text x="82" y="52" font-family="Liberation Sans, sans-serif" font-size="11" fill="#000" font-weight="normal" text-anchor="start" textLength="26.5" lengthAdjust="spacingAndGlyphs">Tasks</text>
<path d="M63 42.5 L67.5 38 L77.5 48 L78.8 53.2 L73.2 52 Z" fill="#3a5a94" stroke="#1a2e58" stroke-width="0.9"/><path d="M73.5 51.8 L78.8 53.2 L77.5 48.2 Z" fill="#ffffff" stroke="#333" stroke-width="0.6"/>
<text x="159" y="71" font-family="Liberation Sans, sans-serif" font-size="11" fill="#000" font-weight="normal" text-anchor="start" textLength="26" lengthAdjust="spacingAndGlyphs">Tasks</text>
<rect x="344.5" y="62.5" width="7" height="7" fill="none" stroke="#8a8a8a" stroke-width="1"/><path d="M344.5 65.5 H351.5" stroke="#8a8a8a"/>
<rect x="366.5" y="62.5" width="5" height="5" fill="#f0f0f0" stroke="#8a8a8a" stroke-width="1"/><rect x="363.5" y="65.5" width="5" height="5" fill="#f0f0f0" stroke="#8a8a8a" stroke-width="1"/>
<rect x="0" y="74" width="375" height="549" fill="url(#taskg)"/>
<rect x="0" y="74" width="375" height="1" fill="#8c8ca0"/>
<rect x="374" y="74" width="1" height="549" fill="#8a8aa0" opacity="0.6"/>
<rect x="152.5" y="94.5" width="71" height="19" fill="#e1e1e1" stroke="#adadad" stroke-width="1"/>
<text x="174" y="108" font-family="Liberation Sans, sans-serif" font-size="11" fill="#000" font-weight="normal" text-anchor="start" textLength="25" lengthAdjust="spacingAndGlyphs">Close</text>
<rect x="8.5" y="156.5" width="357" height="49" fill="#d6dff7" stroke="#ffffff" stroke-width="1"/>
<path d="M8 156 V135 Q8 132 11 132 H362.5 Q365.5 132 365.5 135 V156 Z" fill="url(#hdrg)" stroke="#ffffff" stroke-width="1"/>
<rect x="15" y="142" width="9" height="9" fill="none" stroke="#d01010" stroke-width="1.6"/><circle cx="24" cy="141" r="4.5" fill="none" stroke="#d01010" stroke-width="1.6"/>
<text x="32" y="148.5" font-family="Liberation Sans, sans-serif" font-size="12" fill="#2358c8" font-weight="bold" text-anchor="start" textLength="96" lengthAdjust="spacingAndGlyphs">Solver messages</text>
<circle cx="354" cy="144.3" r="7" fill="#ffffff" stroke="#c3c7d8" stroke-width="1.6"/><path d="M350.5 143.8 L354 140.3 L357.5 143.8 M350.5 147.8 L354 144.3 L357.5 147.8" fill="none" stroke="#1a48b0" stroke-width="1.6"/>
<text x="21" y="186" font-family="Liberation Sans, sans-serif" font-size="11" fill="#1a7f1a" font-weight="normal" text-anchor="start" textLength="81" lengthAdjust="spacingAndGlyphs">Fully constrained</text>
<rect x="318.5" y="171.5" width="32" height="19" fill="#e1e1e1" stroke="#adadad" stroke-width="1"/><rect x="338" y="173" width="1" height="16" fill="#7a7a7a"/>
<path d="M322 180 A6 6 0 0 1 333 177 M336 182 A6 6 0 0 1 325 185" fill="none" stroke="#3a78c8" stroke-width="2.4"/><path d="M333 173 L335 179 L329 178 Z M325 189 L323 183 L329 184 Z" fill="#3a78c8"/>
<path d="M341.5 179.5 h7 l-3.5 4 z" fill="#000"/>
<rect x="8.5" y="238.5" width="357" height="247" fill="#d6dff7" stroke="#ffffff" stroke-width="1"/>
<path d="M8 238 V217 Q8 214 11 214 H362.5 Q365.5 214 365.5 217 V238 Z" fill="url(#hdrg)" stroke="#ffffff" stroke-width="1"/>
<path d="M16.3 231.7 L27.9 220.2" stroke="#444" stroke-width="3"/><path d="M16.3 231.7 L27.9 220.2" stroke="#fff" stroke-width="1.4" stroke-dasharray="1 1"/><path d="M15.8 226.8 L23.4 219.4" stroke="#cc0000" stroke-width="2.4"/><path d="M14.5 228.5 L15.5 224 L19 226 Z M24.8 218 L20 218.6 L22.6 222 Z" fill="#cc0000"/><circle cx="16.3" cy="231.7" r="2.3" fill="#dd0000"/><circle cx="27.9" cy="220.2" r="2.3" fill="#dd0000"/><path d="M20 232.3 H29.2 M20.6 232 L27 225.4 M25 228.5 Q26.5 230 26.5 232" stroke="#cc0000" stroke-width="1.6" fill="none"/>
<text x="32" y="230.5" font-family="Liberation Sans, sans-serif" font-size="12" fill="#2358c8" font-weight="bold" text-anchor="start" textLength="65" lengthAdjust="spacingAndGlyphs">Constraints</text>
<circle cx="354" cy="226.3" r="7" fill="#ffffff" stroke="#c3c7d8" stroke-width="1.6"/><path d="M350.5 225.8 L354 222.3 L357.5 225.8 M350.5 229.8 L354 226.3 L357.5 229.8" fill="none" stroke="#1a48b0" stroke-width="1.6"/>
<rect x="22.5" y="256.5" width="12" height="12" fill="#fff" stroke="#333" stroke-width="1"/>
<rect x="48.5" y="253.5" width="232" height="19" fill="#cccccc" stroke="#bcbcbc" stroke-width="1"/>
<rect x="267" y="255" width="1" height="16" fill="#ffffff"/><path d="M271.5 261.5 h6 l-3 3.5 z" fill="#9a9a9a"/>
<text x="158" y="268" font-family="Liberation Sans, sans-serif" font-size="11" fill="#808080" font-weight="normal" text-anchor="middle" textLength="31" lengthAdjust="spacingAndGlyphs">Filters</text>
<rect x="289.5" y="253.5" width="20" height="19" fill="#e1e1e1" stroke="#adadad" stroke-width="1"/>
<path d="M292 263 Q299.5 255 307 263 Q299.5 271 292 263 Z" fill="#fff" stroke="#333" stroke-width="1"/><circle cx="299.5" cy="263" r="3.2" fill="#3a6cc0"/><circle cx="299.5" cy="263" r="1.5" fill="#111"/>
<rect x="318.5" y="253.5" width="32" height="19" fill="#e1e1e1" stroke="#adadad" stroke-width="1"/><rect x="338" y="255" width="1" height="16" fill="#7a7a7a"/>
<path d="M322 269 L334 257" stroke="#3a6cc0" stroke-width="2.2"/><path d="M323 257 L334 268" stroke="#c0c0c0" stroke-width="2"/>
<path d="M341.5 261.5 h7 l-3.5 4 z" fill="#000"/>
<rect x="22.5" y="280.5" width="329" height="190" fill="#ffffff" stroke="#828790" stroke-width="1"/>
<clipPath id="listclip"><rect x="23" y="281" width="311" height="189"/></clipPath>
<g clip-path="url(#listclip)">
<rect x="27.5" y="290.5" width="12" height="12" fill="#fff" stroke="#333" stroke-width="1"/><path d="M29.5 296.5 L32 299 L37.5 293.5" fill="none" stroke="#222" stroke-width="1.1"/>
<path d="M49 287 L53.5 291.5 M67 287 L62.5 291.5 M49 305 L53.5 300.5 M67 305 L62.5 300.5" stroke="#6e0000" stroke-width="3.4" stroke-linecap="round"/><path d="M49 287 L53.5 291.5 M67 287 L62.5 291.5 M49 305 L53.5 300.5 M67 305 L62.5 300.5" stroke="#cc1010" stroke-width="1.8" stroke-linecap="round"/><circle cx="58" cy="296" r="3.2" fill="#dd1111" stroke="#8a0000" stroke-width="0.8"/>
<text x="77" y="301" font-family="Liberation Sans, sans-serif" font-size="11.5" fill="#000" font-weight="normal" text-anchor="start" textLength="59" lengthAdjust="spacingAndGlyphs">Constraint1</text>
<rect x="27.5" y="318.5" width="12" height="12" fill="#fff" stroke="#333" stroke-width="1"/><path d="M29.5 324.5 L32 327 L37.5 321.5" fill="none" stroke="#222" stroke-width="1.1"/>
<path d="M48.8 334 C48 325 53 316 68 316" fill="none" stroke="#6e0000" stroke-width="3.6" stroke-linecap="round"/><path d="M48.8 334 C48 325 53 316 68 316" fill="none" stroke="#cc1010" stroke-width="2" stroke-linecap="round"/><circle cx="52.5" cy="320.5" r="3.4" fill="#dd1111" stroke="#8a0000" stroke-width="0.8"/>
<text x="77" y="329" font-family="Liberation Sans, sans-serif" font-size="11.5" fill="#000" font-weight="normal" text-anchor="start" textLength="59" lengthAdjust="spacingAndGlyphs">Constraint2</text>
<rect x="27.5" y="346.5" width="12" height="12" fill="#fff" stroke="#333" stroke-width="1"/><path d="M29.5 352.5 L32 355 L37.5 349.5" fill="none" stroke="#222" stroke-width="1.1"/>
<path d="M49 343 L53.5 347.5 M67 343 L62.5 347.5 M49 361 L53.5 356.5 M67 361 L62.5 356.5" stroke="#6e0000" stroke-width="3.4" stroke-linecap="round"/><path d="M49 343 L53.5 347.5 M67 343 L62.5 347.5 M49 361 L53.5 356.5 M67 361 L62.5 356.5" stroke="#cc1010" stroke-width="1.8" stroke-linecap="round"/><circle cx="58" cy="352" r="3.2" fill="#dd1111" stroke="#8a0000" stroke-width="0.8"/>
<text x="77" y="357" font-family="Liberation Sans, sans-serif" font-size="11.5" fill="#000" font-weight="normal" text-anchor="start" textLength="59" lengthAdjust="spacingAndGlyphs">Constraint3</text>
<rect x="27.5" y="374.5" width="12" height="12" fill="#fff" stroke="#333" stroke-width="1"/><path d="M29.5 380.5 L32 383 L37.5 377.5" fill="none" stroke="#222" stroke-width="1.1"/>
<path d="M48.8 390 C48 381 53 372 68 372" fill="none" stroke="#6e0000" stroke-width="3.6" stroke-linecap="round"/><path d="M48.8 390 C48 381 53 372 68 372" fill="none" stroke="#cc1010" stroke-width="2" stroke-linecap="round"/><circle cx="52.5" cy="376.5" r="3.4" fill="#dd1111" stroke="#8a0000" stroke-width="0.8"/>
<text x="77" y="385" font-family="Liberation Sans, sans-serif" font-size="11.5" fill="#000" font-weight="normal" text-anchor="start" textLength="59" lengthAdjust="spacingAndGlyphs">Constraint4</text>
<rect x="27.5" y="402.5" width="12" height="12" fill="#fff" stroke="#333" stroke-width="1"/><path d="M29.5 408.5 L32 411 L37.5 405.5" fill="none" stroke="#222" stroke-width="1.1"/>
<path d="M49 399 L53.5 403.5 M67 399 L62.5 403.5 M49 417 L53.5 412.5 M67 417 L62.5 412.5" stroke="#6e0000" stroke-width="3.4" stroke-linecap="round"/><path d="M49 399 L53.5 403.5 M67 399 L62.5 403.5 M49 417 L53.5 412.5 M67 417 L62.5 412.5" stroke="#cc1010" stroke-width="1.8" stroke-linecap="round"/><circle cx="58" cy="408" r="3.2" fill="#dd1111" stroke="#8a0000" stroke-width="0.8"/>
<text x="77" y="413" font-family="Liberation Sans, sans-serif" font-size="11.5" fill="#000" font-weight="normal" text-anchor="start" textLength="59" lengthAdjust="spacingAndGlyphs">Constraint5</text>
<rect x="27.5" y="430.5" width="12" height="12" fill="#fff" stroke="#333" stroke-width="1"/><path d="M29.5 436.5 L32 439 L37.5 433.5" fill="none" stroke="#222" stroke-width="1.1"/>
<path d="M49 427 L53.5 431.5 M67 427 L62.5 431.5 M49 445 L53.5 440.5 M67 445 L62.5 440.5" stroke="#6e0000" stroke-width="3.4" stroke-linecap="round"/><path d="M49 427 L53.5 431.5 M67 427 L62.5 431.5 M49 445 L53.5 440.5 M67 445 L62.5 440.5" stroke="#cc1010" stroke-width="1.8" stroke-linecap="round"/><circle cx="58" cy="436" r="3.2" fill="#dd1111" stroke="#8a0000" stroke-width="0.8"/>
<text x="77" y="441" font-family="Liberation Sans, sans-serif" font-size="11.5" fill="#000" font-weight="normal" text-anchor="start" textLength="59" lengthAdjust="spacingAndGlyphs">Constraint6</text>
<rect x="27.5" y="458.5" width="12" height="12" fill="#fff" stroke="#333" stroke-width="1"/><path d="M29.5 464.5 L32 467 L37.5 461.5" fill="none" stroke="#222" stroke-width="1.1"/>
<rect x="53" y="461" width="10" height="2.6" fill="#cc1010" stroke="#7a0000" stroke-width="0.8"/><rect x="53" y="466" width="10" height="2.6" fill="#cc1010" stroke="#7a0000" stroke-width="0.8"/>
<text x="77" y="469" font-family="Liberation Sans, sans-serif" font-size="11.5" fill="#000" font-weight="normal" text-anchor="start" textLength="59" lengthAdjust="spacingAndGlyphs">Constraint7</text>
</g>
<rect x="334" y="281" width="17" height="189" fill="#f0f0f0"/>
<rect x="335" y="298" width="15" height="78" fill="#cdcdcd"/>
<path d="M338.5 293 L342.5 289 L346.5 293" fill="none" stroke="#606060" stroke-width="1.4"/>
<path d="M338.5 459 L342.5 463 L346.5 459" fill="none" stroke="#606060" stroke-width="1.4"/>
<path d="M8 520 V498 Q8 495 11 495 H362.5 Q365.5 495 365.5 498 V520 Z" fill="url(#hdrg)" stroke="#ffffff" stroke-width="1"/>
<path d="M15.5 513.5 L28 501" stroke="#555" stroke-width="2.6"/><path d="M15.5 513.5 L28 501" stroke="#eee" stroke-width="0.8"/><circle cx="15.5" cy="513.5" r="1.8" fill="#cc1010"/><circle cx="28" cy="501" r="1.8" fill="#cc1010"/>
<text x="32" y="512.5" font-family="Liberation Sans, sans-serif" font-size="12" fill="#2358c8" font-weight="bold" text-anchor="start" textLength="51" lengthAdjust="spacingAndGlyphs">Elements</text>
<circle cx="354" cy="507.8" r="7" fill="#ffffff" stroke="#c3c7d8" stroke-width="1.6"/><path d="M350.5 507.3 L354 503.8 L357.5 507.3 M350.5 511.3 L354 507.8 L357.5 511.3" fill="none" stroke="#1a48b0" stroke-width="1.6"/><g clip-path="url(#cvp)">
<rect x="379" y="35" width="753" height="588" fill="url(#bgv)"/>
<path d="M379 306.8 L1083.8 385.4" stroke="#e8685a" stroke-width="1.9"/>
<path d="M670 35 L745.5 623" stroke="#66ee66" stroke-width="1.5"/>
<clipPath id="cside"><path d="M520.1 798.5 L1147.4 19.7 L-852.6 -1980.3 L-1479.9 -1201.5 Z"/></clipPath>
<path d="M840.0 399.4 L796.5 453.4 L794.6 455.5 L792.8 457.6 L790.8 459.6 L788.8 461.6 L786.7 463.4 L784.5 465.3 L782.3 467.0 L780.0 468.7 L777.6 470.3 L775.2 471.9 L772.7 473.4 L770.2 474.8 L767.6 476.1 L765.0 477.4 L762.3 478.6 L759.5 479.7 L756.7 480.8 L753.9 481.7 L751.0 482.6 L748.1 483.4 L745.1 484.2 L742.1 484.8 L739.1 485.4 L736.0 485.9 L732.9 486.3 L729.8 486.7 L726.6 486.9 L723.4 487.1 L720.2 487.2 L717.0 487.2 L713.7 487.2 L710.5 487.0 L707.2 486.8 L703.9 486.5 L700.6 486.1 L697.3 485.7 L693.9 485.1 L690.6 484.5 L687.3 483.8 L684.0 483.0 L680.7 482.2 L677.3 481.2 L674.0 480.2 L670.7 479.1 L667.5 478.0 L664.2 476.7 L661.0 475.4 L657.7 474.0 L654.5 472.6 L651.3 471.1 L648.2 469.5 L645.0 467.8 L641.9 466.1 L638.9 464.3 L635.8 462.4 L632.9 460.5 L629.9 458.5 L627.0 456.5 L624.1 454.3 L621.3 452.2 L618.5 450.0 L615.8 447.7 L613.1 445.4 L610.4 443.0 L607.9 440.5 L605.4 438.1 L602.9 435.5 L600.5 433.0 L598.1 430.3 L595.9 427.7 L593.6 425.0 L591.5 422.3 L589.4 419.5 L587.4 416.7 L585.4 413.8 L583.6 411.0 L581.8 408.1 L580.0 405.1 L578.4 402.2 L576.8 399.2 L575.3 396.2 L573.9 393.2 L572.5 390.2 L571.3 387.2 L570.1 384.1 L569.0 381.1 L568.0 378.0 L567.0 374.9 L566.2 371.8 L565.4 368.8 L564.7 365.7 L564.1 362.6 L563.6 359.5 L563.2 356.5 L562.9 353.4 L562.6 350.4 L562.5 347.3 L562.4 344.3 L562.4 341.3 L562.5 338.3 L562.7 335.4 L562.9 332.4 L563.3 329.5 L563.7 326.7 L564.3 323.8 L564.9 321.0 L565.6 318.2 L566.4 315.4 L567.2 312.7 L568.2 310.0 L569.2 307.4 L570.3 304.8 L571.5 302.3 L572.8 299.8 L574.2 297.3 L575.6 294.9 L577.1 292.6 L578.7 290.3 L580.4 288.0 L582.1 285.8 L625.6 231.8 L627.5 229.7 L629.3 227.6 L631.3 225.6 L633.3 223.6 L635.4 221.8 L637.6 219.9 L639.8 218.2 L642.1 216.5 L644.5 214.9 L646.9 213.3 L649.4 211.8 L651.9 210.4 L654.5 209.1 L657.1 207.8 L659.8 206.6 L662.6 205.5 L665.4 204.4 L668.2 203.5 L671.1 202.6 L674.0 201.8 L677.0 201.0 L680.0 200.4 L683.0 199.8 L686.1 199.3 L689.2 198.9 L692.3 198.5 L695.5 198.3 L698.7 198.1 L701.9 198.0 L705.1 198.0 L708.4 198.0 L711.6 198.2 L714.9 198.4 L718.2 198.7 L721.5 199.1 L724.8 199.5 L728.2 200.1 L731.5 200.7 L734.8 201.4 L738.1 202.2 L741.4 203.0 L744.8 204.0 L748.1 205.0 L751.4 206.1 L754.6 207.2 L757.9 208.5 L761.1 209.8 L764.4 211.2 L767.6 212.6 L770.8 214.1 L773.9 215.7 L777.1 217.4 L780.2 219.1 L783.2 220.9 L786.3 222.8 L789.2 224.7 L792.2 226.7 L795.1 228.7 L798.0 230.9 L800.8 233.0 L803.6 235.2 L806.3 237.5 L809.0 239.8 L811.7 242.2 L814.2 244.7 L816.7 247.1 L819.2 249.7 L821.6 252.2 L824.0 254.9 L826.2 257.5 L828.5 260.2 L830.6 262.9 L832.7 265.7 L834.7 268.5 L836.7 271.4 L838.5 274.2 L840.3 277.1 L842.1 280.1 L843.7 283.0 L845.3 286.0 L846.8 289.0 L848.2 292.0 L849.6 295.0 L850.8 298.0 L852.0 301.1 L853.1 304.1 L854.1 307.2 L855.1 310.3 L855.9 313.4 L856.7 316.4 L857.4 319.5 L858.0 322.6 L858.5 325.7 L858.9 328.7 L859.2 331.8 L859.5 334.8 L859.6 337.9 L859.7 340.9 L859.7 343.9 L859.6 346.9 L859.4 349.8 L859.2 352.8 L858.8 355.7 L858.4 358.5 L857.8 361.4 L857.2 364.2 L856.5 367.0 L855.7 369.8 L854.9 372.5 L853.9 375.2 L852.9 377.8 L851.8 380.4 L850.6 382.9 L849.3 385.4 L847.9 387.9 L846.5 390.3 L845.0 392.6 L843.4 394.9 L841.7 397.2 Z" fill="url(#cylg)" clip-path="url(#cside)" stroke="#141414" stroke-width="1.7"/>
<path d="M764.6 481.2 L774.7 555.0 L818.2 501.0 L808.1 427.2 Z" fill="#585858" stroke="#141414" stroke-width="1.7" stroke-linejoin="round"/>
<path d="M813.0 372.0 L856.0 318.0 L925.0 324.0 L905.0 360.0 L877.0 379.0 Z" fill="#6e6e6e" stroke="#141414" stroke-width="1.7" stroke-linejoin="round"/>
<path d="M1034.9 387.9 L993.2 441.1 L992.3 442.3 L991.4 443.4 L990.4 444.5 L989.4 445.5 L988.4 446.5 L987.3 447.5 L986.2 448.4 L985.0 449.4 L983.9 450.2 L982.7 451.1 L981.5 451.9 L980.2 452.7 L978.9 453.4 L977.6 454.1 L976.3 454.8 L974.9 455.4 L973.5 456.0 L972.1 456.6 L970.7 457.1 L969.2 457.5 L967.8 458.0 L966.3 458.4 L964.8 458.7 L963.2 459.0 L961.7 459.3 L960.1 459.5 L958.6 459.7 L957.0 459.9 L955.4 460.0 L953.8 460.0 L952.2 460.0 L950.5 460.0 L948.9 460.0 L947.3 459.9 L945.6 459.7 L944.0 459.5 L942.3 459.3 L940.7 459.0 L939.0 458.7 L937.4 458.4 L935.7 458.0 L934.1 457.6 L932.4 457.1 L930.8 456.6 L929.1 456.0 L927.5 455.4 L925.9 454.8 L924.3 454.2 L922.7 453.5 L921.1 452.7 L919.5 451.9 L918.0 451.1 L916.4 450.3 L914.9 449.4 L913.4 448.5 L911.9 447.5 L910.4 446.6 L909.0 445.5 L907.5 444.5 L906.1 443.4 L904.7 442.3 L903.4 441.2 L902.0 440.0 L900.7 438.8 L899.4 437.6 L898.2 436.3 L896.9 435.1 L895.7 433.8 L894.6 432.5 L893.4 431.1 L892.3 429.7 L891.2 428.4 L890.2 427.0 L889.2 425.5 L888.2 424.1 L887.3 422.6 L886.4 421.2 L885.5 419.7 L884.7 418.2 L883.9 416.7 L883.1 415.1 L882.4 413.6 L881.7 412.0 L881.1 410.5 L880.5 408.9 L879.9 407.3 L879.4 405.8 L879.0 404.2 L878.5 402.6 L878.1 401.0 L877.8 399.4 L877.5 397.8 L877.2 396.3 L877.0 394.7 L876.8 393.1 L876.7 391.5 L876.6 389.9 L876.5 388.4 L876.5 386.8 L876.6 385.3 L876.7 383.7 L876.8 382.2 L877.0 380.7 L877.2 379.2 L877.4 377.7 L877.7 376.2 L878.1 374.8 L878.4 373.3 L878.9 371.9 L879.3 370.5 L879.8 369.1 L880.4 367.7 L881.0 366.4 L881.6 365.1 L882.3 363.8 L883.0 362.5 L883.7 361.3 L884.5 360.0 L885.3 358.8 L886.2 357.7 L927.9 304.5 L928.8 303.3 L929.7 302.2 L930.7 301.1 L931.7 300.1 L932.7 299.1 L933.8 298.1 L934.9 297.2 L936.1 296.2 L937.2 295.4 L938.4 294.5 L939.6 293.7 L940.9 292.9 L942.2 292.2 L943.5 291.5 L944.8 290.8 L946.2 290.2 L947.6 289.6 L949.0 289.0 L950.4 288.5 L951.9 288.1 L953.3 287.6 L954.8 287.2 L956.3 286.9 L957.9 286.6 L959.4 286.3 L961.0 286.1 L962.5 285.9 L964.1 285.7 L965.7 285.6 L967.3 285.6 L968.9 285.6 L970.6 285.6 L972.2 285.6 L973.8 285.7 L975.5 285.9 L977.1 286.1 L978.8 286.3 L980.4 286.6 L982.1 286.9 L983.7 287.2 L985.4 287.6 L987.0 288.0 L988.7 288.5 L990.3 289.0 L992.0 289.6 L993.6 290.2 L995.2 290.8 L996.8 291.4 L998.4 292.1 L1000.0 292.9 L1001.6 293.7 L1003.1 294.5 L1004.7 295.3 L1006.2 296.2 L1007.7 297.1 L1009.2 298.1 L1010.7 299.0 L1012.1 300.1 L1013.6 301.1 L1015.0 302.2 L1016.4 303.3 L1017.7 304.4 L1019.1 305.6 L1020.4 306.8 L1021.7 308.0 L1022.9 309.3 L1024.2 310.5 L1025.4 311.8 L1026.5 313.1 L1027.7 314.5 L1028.8 315.9 L1029.9 317.2 L1030.9 318.6 L1031.9 320.1 L1032.9 321.5 L1033.8 323.0 L1034.7 324.4 L1035.6 325.9 L1036.4 327.4 L1037.2 328.9 L1038.0 330.5 L1038.7 332.0 L1039.4 333.6 L1040.0 335.1 L1040.6 336.7 L1041.2 338.3 L1041.7 339.8 L1042.1 341.4 L1042.6 343.0 L1043.0 344.6 L1043.3 346.2 L1043.6 347.8 L1043.9 349.3 L1044.1 350.9 L1044.3 352.5 L1044.4 354.1 L1044.5 355.7 L1044.6 357.2 L1044.6 358.8 L1044.5 360.3 L1044.4 361.9 L1044.3 363.4 L1044.1 364.9 L1043.9 366.4 L1043.7 367.9 L1043.4 369.4 L1043.0 370.8 L1042.7 372.3 L1042.2 373.7 L1041.8 375.1 L1041.3 376.5 L1040.7 377.9 L1040.1 379.2 L1039.5 380.5 L1038.8 381.8 L1038.1 383.1 L1037.4 384.3 L1036.6 385.6 L1035.8 386.8 Z" fill="url(#cylg2)" stroke="#141414" stroke-width="1.7"/>
<linearGradient id="undg" x1="812" y1="440" x2="835" y2="398" gradientUnits="userSpaceOnUse"><stop offset="0" stop-color="#161616"/><stop offset="1" stop-color="#4a4a4a"/></linearGradient>
<path d="M812.0 398.0 L841.0 401.5 L809.5 441.0 Z" fill="url(#undg)" stroke="#141414" stroke-width="1.2" stroke-linejoin="round"/>
<path d="M627.0 456.5 L624.1 454.3 L621.3 452.2 L618.5 450.0 L615.8 447.7 L613.1 445.4 L610.4 443.0 L607.9 440.5 L605.4 438.1 L602.9 435.5 L600.5 433.0 L598.1 430.3 L595.9 427.7 L593.6 425.0 L591.5 422.3 L589.4 419.5 L587.4 416.7 L585.4 413.8 L583.6 411.0 L581.8 408.1 L580.0 405.1 L578.4 402.2 L576.8 399.2 L575.3 396.2 L573.9 393.2 L572.5 390.2 L571.3 387.2 L570.1 384.1 L569.0 381.1 L568.0 378.0 L567.0 374.9 L566.2 371.8 L565.4 368.8 L564.7 365.7 L564.1 362.6 L563.6 359.5 L563.2 356.5 L562.9 353.4 L562.6 350.4 L562.5 347.3 L562.4 344.3 L562.4 341.3 L562.5 338.3 L562.7 335.4 L562.9 332.4 L563.3 329.5 L563.7 326.7 L564.3 323.8 L564.9 321.0 L565.6 318.2 L566.4 315.4 L567.2 312.7 L568.2 310.0 L569.2 307.4 L570.3 304.8 L571.5 302.3 L572.8 299.8 L574.2 297.3 L575.6 294.9 L577.1 292.6 L578.7 290.3 L580.4 288.0 L582.1 285.8 L584.0 283.7 L585.8 281.6 L587.8 279.6 L589.8 277.6 L591.9 275.8 L594.1 273.9 L596.3 272.2 L598.6 270.5 L601.0 268.9 L603.4 267.3 L605.9 265.8 L608.4 264.4 L611.0 263.1 L613.6 261.8 L616.3 260.6 L619.1 259.5 L621.9 258.4 L624.7 257.5 L627.6 256.6 L630.5 255.8 L633.5 255.0 L636.5 254.4 L639.5 253.8 L642.6 253.3 L645.7 252.9 L648.8 252.5 L652.0 252.3 L655.2 252.1 L658.4 252.0 L661.6 252.0 L664.9 252.0 L668.1 252.2 L671.4 252.4 L674.7 252.7 L678.0 253.1 L681.3 253.5 L684.7 254.1 L688.0 254.7 L691.3 255.4 L694.6 256.2 L697.9 257.0 L701.3 258.0 L704.6 259.0 L707.9 260.1 L711.1 261.2 L714.4 262.5 L717.6 263.8 L720.9 265.2 L724.1 266.6 L727.3 268.1 L730.4 269.7 L733.6 271.4 L736.7 273.1 L739.7 274.9 L742.8 276.8 L745.7 278.7 L748.7 280.7 L751.6 282.7 L754.5 284.9 L757.3 287.0 L760.1 289.2 L762.8 291.5 L765.5 293.8 L768.2 296.2 L770.7 298.7 L773.2 301.1 L775.7 303.7 L778.1 306.2 L780.5 308.9 L782.7 311.5 L785.0 314.2 L787.1 316.9 L789.2 319.7 L791.2 322.5 L793.2 325.4 L795.0 328.2 L796.8 331.1 L798.6 334.1 L800.2 337.0 L801.8 340.0 L803.3 343.0 L804.7 346.0 L806.1 349.0 L807.3 352.0 L808.5 355.1 L809.6 358.1 L810.6 361.2 L811.6 364.3 L812.4 367.4 L813.2 370.4 L813.9 373.5 L814.5 376.6 L815.0 379.7 L815.4 382.7 L815.7 385.8 L816.0 388.8 L816.1 391.9 L816.2 394.9 L816.2 397.9 L816.1 400.9 L815.9 403.8 L815.7 406.8 L815.3 409.7 L814.9 412.5 L814.3 415.4 L813.7 418.2 L813.0 421.0 L812.2 423.8 L811.4 426.5 L810.4 429.2 L809.4 431.8 L808.3 434.4 L807.1 436.9 L805.8 439.4 L804.4 441.9 L803.0 444.3 L801.5 446.6 L799.9 448.9 L798.2 451.2 L796.5 453.4 L794.6 455.5 L792.8 457.6 L790.8 459.6 L788.8 461.6 L786.7 463.4 L784.5 465.3 L782.3 467.0 L780.0 468.7 L777.6 470.3 L775.2 471.9 L772.7 473.4 L770.2 474.8 L767.6 476.1 L765.0 477.4 L762.3 478.6 L759.5 479.7 L756.7 480.8 L753.9 481.7 L751.0 482.6 L748.1 483.4 L745.1 484.2 L742.1 484.8 L739.1 485.4 L736.0 485.9 L732.9 486.3 L729.8 486.7 L726.6 486.9 L723.4 487.1 L720.2 487.2 L717.0 487.2 L713.7 487.2 L710.5 487.0 L707.2 486.8 L703.9 486.5 L700.6 486.1 L697.3 485.7 L693.9 485.1 L690.6 484.5 L687.3 483.8 L684.0 483.0 L680.7 482.2 L677.3 481.2 L674.0 480.2 L670.7 479.1 L667.5 478.0 L664.2 476.7 L661.0 475.4 L657.7 474.0 L654.5 472.6 L651.3 471.1 L648.2 469.5 L645.0 467.8 L641.9 466.1 L638.9 464.3 L635.8 462.4 L632.9 460.5 L629.9 458.5 Z M648.2 424.3 L646.4 422.9 L644.6 421.4 L642.8 419.9 L641.1 418.3 L639.4 416.7 L637.7 415.1 L636.1 413.5 L634.5 411.8 L632.9 410.1 L631.4 408.4 L629.9 406.6 L628.5 404.8 L627.1 403.0 L625.8 401.2 L624.5 399.3 L623.2 397.5 L622.0 395.6 L620.8 393.7 L619.7 391.8 L618.6 389.8 L617.6 387.9 L616.6 385.9 L615.7 384.0 L614.8 382.0 L614.0 380.0 L613.2 378.0 L612.5 376.0 L611.9 374.0 L611.2 372.0 L610.7 370.0 L610.2 368.0 L609.7 366.0 L609.3 364.0 L609.0 362.0 L608.7 360.0 L608.5 358.1 L608.3 356.1 L608.2 354.1 L608.1 352.2 L608.1 350.2 L608.2 348.3 L608.3 346.4 L608.5 344.5 L608.7 342.7 L609.0 340.8 L609.3 339.0 L609.7 337.2 L610.1 335.4 L610.6 333.6 L611.2 331.9 L611.8 330.2 L612.4 328.5 L613.1 326.8 L613.9 325.2 L614.7 323.6 L615.6 322.1 L616.5 320.5 L617.5 319.0 L618.5 317.6 L619.5 316.2 L620.7 314.8 L621.8 313.4 L623.0 312.1 L624.3 310.9 L625.6 309.6 L626.9 308.5 L628.3 307.3 L629.7 306.2 L631.2 305.2 L632.7 304.2 L634.3 303.2 L635.8 302.3 L637.5 301.4 L639.1 300.6 L640.8 299.8 L642.5 299.1 L644.3 298.4 L646.1 297.8 L647.9 297.2 L649.8 296.7 L651.6 296.3 L653.5 295.8 L655.5 295.5 L657.4 295.1 L659.4 294.9 L661.4 294.7 L663.4 294.5 L665.4 294.4 L667.5 294.3 L669.6 294.3 L671.6 294.4 L673.7 294.5 L675.8 294.6 L677.9 294.8 L680.0 295.1 L682.2 295.4 L684.3 295.7 L686.4 296.2 L688.6 296.6 L690.7 297.1 L692.9 297.7 L695.0 298.3 L697.1 299.0 L699.2 299.7 L701.4 300.4 L703.5 301.3 L705.6 302.1 L707.7 303.0 L709.8 304.0 L711.8 305.0 L713.9 306.0 L715.9 307.1 L717.9 308.2 L719.9 309.4 L721.9 310.6 L723.8 311.9 L725.8 313.2 L727.7 314.5 L729.6 315.9 L731.4 317.3 L733.2 318.7 L735.0 320.2 L736.8 321.7 L738.5 323.3 L740.2 324.9 L741.9 326.5 L743.5 328.1 L745.1 329.8 L746.7 331.5 L748.2 333.2 L749.7 335.0 L751.1 336.8 L752.5 338.6 L753.8 340.4 L755.1 342.3 L756.4 344.1 L757.6 346.0 L758.8 347.9 L759.9 349.8 L761.0 351.8 L762.0 353.7 L763.0 355.7 L763.9 357.6 L764.8 359.6 L765.6 361.6 L766.4 363.6 L767.1 365.6 L767.7 367.6 L768.4 369.6 L768.9 371.6 L769.4 373.6 L769.9 375.6 L770.3 377.6 L770.6 379.6 L770.9 381.6 L771.1 383.5 L771.3 385.5 L771.4 387.5 L771.5 389.4 L771.5 391.4 L771.4 393.3 L771.3 395.2 L771.1 397.1 L770.9 398.9 L770.6 400.8 L770.3 402.6 L769.9 404.4 L769.5 406.2 L769.0 408.0 L768.4 409.7 L767.8 411.4 L767.2 413.1 L766.5 414.8 L765.7 416.4 L764.9 418.0 L764.0 419.5 L763.1 421.1 L762.1 422.6 L761.1 424.0 L760.1 425.4 L758.9 426.8 L757.8 428.2 L756.6 429.5 L755.3 430.7 L754.0 432.0 L752.7 433.1 L751.3 434.3 L749.9 435.4 L748.4 436.4 L746.9 437.4 L745.3 438.4 L743.8 439.3 L742.1 440.2 L740.5 441.0 L738.8 441.8 L737.1 442.5 L735.3 443.2 L733.5 443.8 L731.7 444.4 L729.8 444.9 L728.0 445.3 L726.1 445.8 L724.1 446.1 L722.2 446.5 L720.2 446.7 L718.2 446.9 L716.2 447.1 L714.2 447.2 L712.1 447.3 L710.0 447.3 L708.0 447.2 L705.9 447.1 L703.8 447.0 L701.7 446.8 L699.6 446.5 L697.4 446.2 L695.3 445.9 L693.2 445.4 L691.0 445.0 L688.9 444.5 L686.7 443.9 L684.6 443.3 L682.5 442.6 L680.4 441.9 L678.2 441.2 L676.1 440.3 L674.0 439.5 L671.9 438.6 L669.8 437.6 L667.8 436.6 L665.7 435.6 L663.7 434.5 L661.7 433.4 L659.7 432.2 L657.7 431.0 L655.8 429.7 L653.8 428.4 L651.9 427.1 L650.0 425.7 Z" fill="#a8a8a8" fill-rule="evenodd" stroke="#141414" stroke-width="1.7"/>
<path d="M690.8 445.0 L706.7 446.5 L718.3 549.0 L703.8 547.7 Z" fill="url(#bgv)"/>
<path d="M690.8 445.0 L706.7 446.5 L717.0 531.0 L703.8 547.7 Z" fill="#5a5a5a" stroke="#141414" stroke-width="1.2"/>
<path d="M638.1 464.8 L648.9 541.9 L703.8 547.7 L690.8 445.0 L660.0 440.0 L630.0 455.0 Z" fill="#a8a8a8"/>
<path d="M638.1 464.8 L648.9 541.9 L703.8 547.7 L690.8 445" fill="none" stroke="#141414" stroke-width="1.7" stroke-linejoin="round"/>
<path d="M706.7 446.5 L718.3 549.0 L774.7 555.0 L764.6 481.2 L790.0 455.0 L760.0 430.0 Z" fill="#a8a8a8"/>
<path d="M706.7 446.5 L718.3 549 L774.7 555 L764.6 481.2" fill="none" stroke="#141414" stroke-width="1.7" stroke-linejoin="round"/>
<g clip-path="url(#cE2)">
<path d="M648.2 424.3 L646.4 422.9 L644.6 421.4 L642.8 419.9 L641.1 418.3 L639.4 416.7 L637.7 415.1 L636.1 413.5 L634.5 411.8 L632.9 410.1 L631.4 408.4 L629.9 406.6 L628.5 404.8 L627.1 403.0 L625.8 401.2 L624.5 399.3 L623.2 397.5 L622.0 395.6 L620.8 393.7 L619.7 391.8 L618.6 389.8 L617.6 387.9 L616.6 385.9 L615.7 384.0 L614.8 382.0 L614.0 380.0 L613.2 378.0 L612.5 376.0 L611.9 374.0 L611.2 372.0 L610.7 370.0 L610.2 368.0 L609.7 366.0 L609.3 364.0 L609.0 362.0 L608.7 360.0 L608.5 358.1 L608.3 356.1 L608.2 354.1 L608.1 352.2 L608.1 350.2 L608.2 348.3 L608.3 346.4 L608.5 344.5 L608.7 342.7 L609.0 340.8 L609.3 339.0 L609.7 337.2 L610.1 335.4 L610.6 333.6 L611.2 331.9 L611.8 330.2 L612.4 328.5 L613.1 326.8 L613.9 325.2 L614.7 323.6 L615.6 322.1 L616.5 320.5 L617.5 319.0 L618.5 317.6 L619.5 316.2 L620.7 314.8 L621.8 313.4 L623.0 312.1 L624.3 310.9 L625.6 309.6 L626.9 308.5 L628.3 307.3 L629.7 306.2 L631.2 305.2 L632.7 304.2 L634.3 303.2 L635.8 302.3 L637.5 301.4 L639.1 300.6 L640.8 299.8 L642.5 299.1 L644.3 298.4 L646.1 297.8 L647.9 297.2 L649.8 296.7 L651.6 296.3 L653.5 295.8 L655.5 295.5 L657.4 295.1 L659.4 294.9 L661.4 294.7 L663.4 294.5 L665.4 294.4 L667.5 294.3 L669.6 294.3 L671.6 294.4 L673.7 294.5 L675.8 294.6 L677.9 294.8 L680.0 295.1 L682.2 295.4 L684.3 295.7 L686.4 296.2 L688.6 296.6 L690.7 297.1 L692.9 297.7 L695.0 298.3 L697.1 299.0 L699.2 299.7 L701.4 300.4 L703.5 301.3 L705.6 302.1 L707.7 303.0 L709.8 304.0 L711.8 305.0 L713.9 306.0 L715.9 307.1 L717.9 308.2 L719.9 309.4 L721.9 310.6 L723.8 311.9 L725.8 313.2 L727.7 314.5 L729.6 315.9 L731.4 317.3 L733.2 318.7 L735.0 320.2 L736.8 321.7 L738.5 323.3 L740.2 324.9 L741.9 326.5 L743.5 328.1 L745.1 329.8 L746.7 331.5 L748.2 333.2 L749.7 335.0 L751.1 336.8 L752.5 338.6 L753.8 340.4 L755.1 342.3 L756.4 344.1 L757.6 346.0 L758.8 347.9 L759.9 349.8 L761.0 351.8 L762.0 353.7 L763.0 355.7 L763.9 357.6 L764.8 359.6 L765.6 361.6 L766.4 363.6 L767.1 365.6 L767.7 367.6 L768.4 369.6 L768.9 371.6 L769.4 373.6 L769.9 375.6 L770.3 377.6 L770.6 379.6 L770.9 381.6 L771.1 383.5 L771.3 385.5 L771.4 387.5 L771.5 389.4 L771.5 391.4 L771.4 393.3 L771.3 395.2 L771.1 397.1 L770.9 398.9 L770.6 400.8 L770.3 402.6 L769.9 404.4 L769.5 406.2 L769.0 408.0 L768.4 409.7 L767.8 411.4 L767.2 413.1 L766.5 414.8 L765.7 416.4 L764.9 418.0 L764.0 419.5 L763.1 421.1 L762.1 422.6 L761.1 424.0 L760.1 425.4 L758.9 426.8 L757.8 428.2 L756.6 429.5 L755.3 430.7 L754.0 432.0 L752.7 433.1 L751.3 434.3 L749.9 435.4 L748.4 436.4 L746.9 437.4 L745.3 438.4 L743.8 439.3 L742.1 440.2 L740.5 441.0 L738.8 441.8 L737.1 442.5 L735.3 443.2 L733.5 443.8 L731.7 444.4 L729.8 444.9 L728.0 445.3 L726.1 445.8 L724.1 446.1 L722.2 446.5 L720.2 446.7 L718.2 446.9 L716.2 447.1 L714.2 447.2 L712.1 447.3 L710.0 447.3 L708.0 447.2 L705.9 447.1 L703.8 447.0 L701.7 446.8 L699.6 446.5 L697.4 446.2 L695.3 445.9 L693.2 445.4 L691.0 445.0 L688.9 444.5 L686.7 443.9 L684.6 443.3 L682.5 442.6 L680.4 441.9 L678.2 441.2 L676.1 440.3 L674.0 439.5 L671.9 438.6 L669.8 437.6 L667.8 436.6 L665.7 435.6 L663.7 434.5 L661.7 433.4 L659.7 432.2 L657.7 431.0 L655.8 429.7 L653.8 428.4 L651.9 427.1 L650.0 425.7 Z" fill="url(#inng)"/>
<path d="M748.0 392.8 L800.0 380.0 L790.0 470.0 L700.0 470.0 L706.3 446.8 Z" fill="url(#inng2)"/>
<g clip-path="url(#cE4)">
<rect x="379" y="35" width="753" height="588" fill="url(#bgv)"/>
<path d="M379 306.8 L1083.8 385.4" stroke="#e8685a" stroke-width="1.9"/>
<path d="M670 35 L745.5 623" stroke="#66ee66" stroke-width="1.5"/>
</g>
<path d="M690.9 445.5 L733.3 391.6 L748.0 392.8 L706.3 446.8 Z" fill="url(#bgv)"/>
<path d="M690.9 445.5 L733.3 391.6 L735.2 407.6 L706.3 446.8 Z" fill="#5a5a5a"/>
<path d="M670 35 L720.4 427.5" stroke="#66ee66" stroke-width="1.5"/>
<path d="M690.9 445.5 L733.3 391.6 L735.2 407.6 M748 392.8 L706.3 446.8" fill="none" stroke="#141414" stroke-width="1.7" stroke-linejoin="round"/>
<path d="M691.7 370.3 L689.9 368.9 L688.1 367.4 L686.3 365.9 L684.6 364.3 L682.9 362.7 L681.2 361.1 L679.6 359.5 L678.0 357.8 L676.4 356.1 L674.9 354.4 L673.4 352.6 L672.0 350.8 L670.6 349.0 L669.3 347.2 L668.0 345.3 L666.7 343.5 L665.5 341.6 L664.3 339.7 L663.2 337.8 L662.1 335.8 L661.1 333.9 L660.1 331.9 L659.2 330.0 L658.3 328.0 L657.5 326.0 L656.7 324.0 L656.0 322.0 L655.4 320.0 L654.7 318.0 L654.2 316.0 L653.7 314.0 L653.2 312.0 L652.8 310.0 L652.5 308.0 L652.2 306.0 L652.0 304.1 L651.8 302.1 L651.7 300.1 L651.6 298.2 L651.6 296.2 L651.7 294.3 L651.8 292.4 L652.0 290.5 L652.2 288.7 L652.5 286.8 L652.8 285.0 L653.2 283.2 L653.6 281.4 L654.1 279.6 L654.7 277.9 L655.3 276.2 L655.9 274.5 L656.6 272.8 L657.4 271.2 L658.2 269.6 L659.1 268.1 L660.0 266.5 L661.0 265.0 L662.0 263.6 L663.0 262.2 L664.2 260.8 L665.3 259.4 L666.5 258.1 L667.8 256.9 L669.1 255.6 L670.4 254.5 L671.8 253.3 L673.2 252.2 L674.7 251.2 L676.2 250.2 L677.8 249.2 L679.3 248.3 L681.0 247.4 L682.6 246.6 L684.3 245.8 L686.0 245.1 L687.8 244.4 L689.6 243.8 L691.4 243.2 L693.3 242.7 L695.1 242.3 L697.0 241.8 L699.0 241.5 L700.9 241.1 L702.9 240.9 L704.9 240.7 L706.9 240.5 L708.9 240.4 L711.0 240.3 L713.1 240.3 L715.1 240.4 L717.2 240.5 L719.3 240.6 L721.4 240.8 L723.5 241.1 L725.7 241.4 L727.8 241.7 L729.9 242.2 L732.1 242.6 L734.2 243.1 L736.4 243.7 L738.5 244.3 L740.6 245.0 L742.7 245.7 L744.9 246.4 L747.0 247.3 L749.1 248.1 L751.2 249.0 L753.3 250.0 L755.3 251.0 L757.4 252.0 L759.4 253.1 L761.4 254.2 L763.4 255.4 L765.4 256.6 L767.3 257.9 L769.3 259.2 L771.2 260.5 L773.1 261.9 L774.9 263.3 L776.7 264.7 L778.5 266.2 L780.3 267.7 L782.0 269.3 L783.7 270.9 L785.4 272.5 L787.0 274.1 L788.6 275.8 L790.2 277.5 L791.7 279.2 L793.2 281.0 L794.6 282.8 L796.0 284.6 L797.3 286.4 L798.6 288.3 L799.9 290.1 L801.1 292.0 L802.3 293.9 L803.4 295.8 L804.5 297.8 L805.5 299.7 L806.5 301.7 L807.4 303.6 L808.3 305.6 L809.1 307.6 L809.9 309.6 L810.6 311.6 L811.2 313.6 L811.9 315.6 L812.4 317.6 L812.9 319.6 L813.4 321.6 L813.8 323.6 L814.1 325.6 L814.4 327.6 L814.6 329.5 L814.8 331.5 L814.9 333.5 L815.0 335.4 L815.0 337.4 L814.9 339.3 L814.8 341.2 L814.6 343.1 L814.4 344.9 L814.1 346.8 L813.8 348.6 L813.4 350.4 L813.0 352.2 L812.5 354.0 L811.9 355.7 L811.3 357.4 L810.7 359.1 L810.0 360.8 L809.2 362.4 L808.4 364.0 L807.5 365.5 L806.6 367.1 L805.6 368.6 L804.6 370.0 L803.6 371.4 L802.4 372.8 L801.3 374.2 L800.1 375.5 L798.8 376.7 L797.5 378.0 L796.2 379.1 L794.8 380.3 L793.4 381.4 L791.9 382.4 L790.4 383.4 L788.8 384.4 L787.3 385.3 L785.6 386.2 L784.0 387.0 L782.3 387.8 L780.6 388.5 L778.8 389.2 L777.0 389.8 L775.2 390.4 L773.3 390.9 L771.5 391.3 L769.6 391.8 L767.6 392.1 L765.7 392.5 L763.7 392.7 L761.7 392.9 L759.7 393.1 L757.7 393.2 L755.6 393.3 L753.5 393.3 L751.5 393.2 L749.4 393.1 L747.3 393.0 L745.2 392.8 L743.1 392.5 L740.9 392.2 L738.8 391.9 L736.7 391.4 L734.5 391.0 L732.4 390.5 L730.2 389.9 L728.1 389.3 L726.0 388.6 L723.9 387.9 L721.7 387.2 L719.6 386.3 L717.5 385.5 L715.4 384.6 L713.3 383.6 L711.3 382.6 L709.2 381.6 L707.2 380.5 L705.2 379.4 L703.2 378.2 L701.2 377.0 L699.3 375.7 L697.3 374.4 L695.4 373.1 L693.5 371.7 Z" fill="none" stroke="#141414" stroke-width="1.7"/>
</g>
<path d="M648.2 424.3 L646.4 422.9 L644.6 421.4 L642.8 419.9 L641.1 418.3 L639.4 416.7 L637.7 415.1 L636.1 413.5 L634.5 411.8 L632.9 410.1 L631.4 408.4 L629.9 406.6 L628.5 404.8 L627.1 403.0 L625.8 401.2 L624.5 399.3 L623.2 397.5 L622.0 395.6 L620.8 393.7 L619.7 391.8 L618.6 389.8 L617.6 387.9 L616.6 385.9 L615.7 384.0 L614.8 382.0 L614.0 380.0 L613.2 378.0 L612.5 376.0 L611.9 374.0 L611.2 372.0 L610.7 370.0 L610.2 368.0 L609.7 366.0 L609.3 364.0 L609.0 362.0 L608.7 360.0 L608.5 358.1 L608.3 356.1 L608.2 354.1 L608.1 352.2 L608.1 350.2 L608.2 348.3 L608.3 346.4 L608.5 344.5 L608.7 342.7 L609.0 340.8 L609.3 339.0 L609.7 337.2 L610.1 335.4 L610.6 333.6 L611.2 331.9 L611.8 330.2 L612.4 328.5 L613.1 326.8 L613.9 325.2 L614.7 323.6 L615.6 322.1 L616.5 320.5 L617.5 319.0 L618.5 317.6 L619.5 316.2 L620.7 314.8 L621.8 313.4 L623.0 312.1 L624.3 310.9 L625.6 309.6 L626.9 308.5 L628.3 307.3 L629.7 306.2 L631.2 305.2 L632.7 304.2 L634.3 303.2 L635.8 302.3 L637.5 301.4 L639.1 300.6 L640.8 299.8 L642.5 299.1 L644.3 298.4 L646.1 297.8 L647.9 297.2 L649.8 296.7 L651.6 296.3 L653.5 295.8 L655.5 295.5 L657.4 295.1 L659.4 294.9 L661.4 294.7 L663.4 294.5 L665.4 294.4 L667.5 294.3 L669.6 294.3 L671.6 294.4 L673.7 294.5 L675.8 294.6 L677.9 294.8 L680.0 295.1 L682.2 295.4 L684.3 295.7 L686.4 296.2 L688.6 296.6 L690.7 297.1 L692.9 297.7 L695.0 298.3 L697.1 299.0 L699.2 299.7 L701.4 300.4 L703.5 301.3 L705.6 302.1 L707.7 303.0 L709.8 304.0 L711.8 305.0 L713.9 306.0 L715.9 307.1 L717.9 308.2 L719.9 309.4 L721.9 310.6 L723.8 311.9 L725.8 313.2 L727.7 314.5 L729.6 315.9 L731.4 317.3 L733.2 318.7 L735.0 320.2 L736.8 321.7 L738.5 323.3 L740.2 324.9 L741.9 326.5 L743.5 328.1 L745.1 329.8 L746.7 331.5 L748.2 333.2 L749.7 335.0 L751.1 336.8 L752.5 338.6 L753.8 340.4 L755.1 342.3 L756.4 344.1 L757.6 346.0 L758.8 347.9 L759.9 349.8 L761.0 351.8 L762.0 353.7 L763.0 355.7 L763.9 357.6 L764.8 359.6 L765.6 361.6 L766.4 363.6 L767.1 365.6 L767.7 367.6 L768.4 369.6 L768.9 371.6 L769.4 373.6 L769.9 375.6 L770.3 377.6 L770.6 379.6 L770.9 381.6 L771.1 383.5 L771.3 385.5 L771.4 387.5 L771.5 389.4 L771.5 391.4 L771.4 393.3 L771.3 395.2 L771.1 397.1 L770.9 398.9 L770.6 400.8 L770.3 402.6 L769.9 404.4 L769.5 406.2 L769.0 408.0 L768.4 409.7 L767.8 411.4 L767.2 413.1 L766.5 414.8 L765.7 416.4 L764.9 418.0 L764.0 419.5 L763.1 421.1 L762.1 422.6 L761.1 424.0 L760.1 425.4 L758.9 426.8 L757.8 428.2 L756.6 429.5 L755.3 430.7 L754.0 432.0 L752.7 433.1 L751.3 434.3 L749.9 435.4 L748.4 436.4 L746.9 437.4 L745.3 438.4 L743.8 439.3 L742.1 440.2 L740.5 441.0 L738.8 441.8 L737.1 442.5 L735.3 443.2 L733.5 443.8 L731.7 444.4 L729.8 444.9 L728.0 445.3 L726.1 445.8 L724.1 446.1 L722.2 446.5 L720.2 446.7 L718.2 446.9 L716.2 447.1 L714.2 447.2 L712.1 447.3 L710.0 447.3 L708.0 447.2 L705.9 447.1 L703.8 447.0 L701.7 446.8 L699.6 446.5 L697.4 446.2 L695.3 445.9 L693.2 445.4 L691.0 445.0 L688.9 444.5 L686.7 443.9 L684.6 443.3 L682.5 442.6 L680.4 441.9 L678.2 441.2 L676.1 440.3 L674.0 439.5 L671.9 438.6 L669.8 437.6 L667.8 436.6 L665.7 435.6 L663.7 434.5 L661.7 433.4 L659.7 432.2 L657.7 431.0 L655.8 429.7 L653.8 428.4 L651.9 427.1 L650.0 425.7 Z" fill="none" stroke="#141414" stroke-width="1.7"/>
<path d="M904.7 442.3 L903.4 441.2 L902.0 440.0 L900.7 438.8 L899.4 437.6 L898.2 436.3 L896.9 435.1 L895.7 433.8 L894.6 432.5 L893.4 431.1 L892.3 429.7 L891.2 428.4 L890.2 427.0 L889.2 425.5 L888.2 424.1 L887.3 422.6 L886.4 421.2 L885.5 419.7 L884.7 418.2 L883.9 416.7 L883.1 415.1 L882.4 413.6 L881.7 412.0 L881.1 410.5 L880.5 408.9 L879.9 407.3 L879.4 405.8 L879.0 404.2 L878.5 402.6 L878.1 401.0 L877.8 399.4 L877.5 397.8 L877.2 396.3 L877.0 394.7 L876.8 393.1 L876.7 391.5 L876.6 389.9 L876.5 388.4 L876.5 386.8 L876.6 385.3 L876.7 383.7 L876.8 382.2 L877.0 380.7 L877.2 379.2 L877.4 377.7 L877.7 376.2 L878.1 374.8 L878.4 373.3 L878.9 371.9 L879.3 370.5 L879.8 369.1 L880.4 367.7 L881.0 366.4 L881.6 365.1 L882.3 363.8 L883.0 362.5 L883.7 361.3 L884.5 360.0 L885.3 358.8 L886.2 357.7 L887.1 356.5 L888.0 355.4 L889.0 354.3 L890.0 353.3 L891.0 352.3 L892.1 351.3 L893.2 350.4 L894.4 349.4 L895.5 348.6 L896.7 347.7 L897.9 346.9 L899.2 346.1 L900.5 345.4 L901.8 344.7 L903.1 344.0 L904.5 343.4 L905.9 342.8 L907.3 342.2 L908.7 341.7 L910.2 341.3 L911.6 340.8 L913.1 340.4 L914.6 340.1 L916.2 339.8 L917.7 339.5 L919.3 339.3 L920.8 339.1 L922.4 338.9 L924.0 338.8 L925.6 338.8 L927.2 338.8 L928.9 338.8 L930.5 338.8 L932.1 338.9 L933.8 339.1 L935.4 339.3 L937.1 339.5 L938.7 339.8 L940.4 340.1 L942.0 340.4 L943.7 340.8 L945.3 341.2 L947.0 341.7 L948.6 342.2 L950.3 342.8 L951.9 343.4 L953.5 344.0 L955.1 344.6 L956.7 345.3 L958.3 346.1 L959.9 346.9 L961.4 347.7 L963.0 348.5 L964.5 349.4 L966.0 350.3 L967.5 351.3 L969.0 352.2 L970.4 353.3 L971.9 354.3 L973.3 355.4 L974.7 356.5 L976.0 357.6 L977.4 358.8 L978.7 360.0 L980.0 361.2 L981.2 362.5 L982.5 363.7 L983.7 365.0 L984.8 366.3 L986.0 367.7 L987.1 369.1 L988.2 370.4 L989.2 371.8 L990.2 373.3 L991.2 374.7 L992.1 376.2 L993.0 377.6 L993.9 379.1 L994.7 380.6 L995.5 382.1 L996.3 383.7 L997.0 385.2 L997.7 386.8 L998.3 388.3 L998.9 389.9 L999.5 391.5 L1000.0 393.0 L1000.4 394.6 L1000.9 396.2 L1001.3 397.8 L1001.6 399.4 L1001.9 401.0 L1002.2 402.5 L1002.4 404.1 L1002.6 405.7 L1002.7 407.3 L1002.8 408.9 L1002.9 410.4 L1002.9 412.0 L1002.8 413.5 L1002.7 415.1 L1002.6 416.6 L1002.4 418.1 L1002.2 419.6 L1002.0 421.1 L1001.7 422.6 L1001.3 424.0 L1001.0 425.5 L1000.5 426.9 L1000.1 428.3 L999.6 429.7 L999.0 431.1 L998.4 432.4 L997.8 433.7 L997.1 435.0 L996.4 436.3 L995.7 437.5 L994.9 438.8 L994.1 440.0 L993.2 441.1 L992.3 442.3 L991.4 443.4 L990.4 444.5 L989.4 445.5 L988.4 446.5 L987.3 447.5 L986.2 448.4 L985.0 449.4 L983.9 450.2 L982.7 451.1 L981.5 451.9 L980.2 452.7 L978.9 453.4 L977.6 454.1 L976.3 454.8 L974.9 455.4 L973.5 456.0 L972.1 456.6 L970.7 457.1 L969.2 457.5 L967.8 458.0 L966.3 458.4 L964.8 458.7 L963.2 459.0 L961.7 459.3 L960.1 459.5 L958.6 459.7 L957.0 459.9 L955.4 460.0 L953.8 460.0 L952.2 460.0 L950.5 460.0 L948.9 460.0 L947.3 459.9 L945.6 459.7 L944.0 459.5 L942.3 459.3 L940.7 459.0 L939.0 458.7 L937.4 458.4 L935.7 458.0 L934.1 457.6 L932.4 457.1 L930.8 456.6 L929.1 456.0 L927.5 455.4 L925.9 454.8 L924.3 454.2 L922.7 453.5 L921.1 452.7 L919.5 451.9 L918.0 451.1 L916.4 450.3 L914.9 449.4 L913.4 448.5 L911.9 447.5 L910.4 446.6 L909.0 445.5 L907.5 444.5 L906.1 443.4 Z M926.9 423.7 L926.2 423.3 L925.5 422.8 L924.8 422.3 L924.1 421.8 L923.4 421.3 L922.7 420.8 L922.0 420.3 L921.4 419.7 L920.7 419.2 L920.1 418.6 L919.5 418.0 L918.9 417.4 L918.3 416.8 L917.8 416.2 L917.2 415.6 L916.7 414.9 L916.2 414.3 L915.7 413.6 L915.2 412.9 L914.7 412.2 L914.3 411.6 L913.8 410.9 L913.4 410.1 L913.0 409.4 L912.6 408.7 L912.3 408.0 L912.0 407.3 L911.6 406.5 L911.4 405.8 L911.1 405.0 L910.8 404.3 L910.6 403.5 L910.4 402.8 L910.2 402.0 L910.0 401.3 L909.9 400.5 L909.7 399.7 L909.6 399.0 L909.6 398.2 L909.5 397.5 L909.4 396.7 L909.4 396.0 L909.4 395.2 L909.5 394.5 L909.5 393.7 L909.6 393.0 L909.7 392.2 L909.8 391.5 L909.9 390.8 L910.0 390.1 L910.2 389.4 L910.4 388.7 L910.6 388.0 L910.9 387.3 L911.1 386.6 L911.4 385.9 L911.7 385.3 L912.0 384.6 L912.3 384.0 L912.7 383.4 L913.1 382.7 L913.5 382.1 L913.9 381.5 L914.3 381.0 L914.8 380.4 L915.2 379.8 L915.7 379.3 L916.2 378.8 L916.7 378.3 L917.3 377.8 L917.8 377.3 L918.4 376.8 L919.0 376.4 L919.6 375.9 L920.2 375.5 L920.8 375.1 L921.5 374.7 L922.1 374.3 L922.8 374.0 L923.5 373.7 L924.1 373.4 L924.9 373.1 L925.6 372.8 L926.3 372.5 L927.0 372.3 L927.8 372.1 L928.5 371.9 L929.3 371.7 L930.1 371.5 L930.8 371.4 L931.6 371.2 L932.4 371.1 L933.2 371.1 L934.0 371.0 L934.8 370.9 L935.6 370.9 L936.4 370.9 L937.3 370.9 L938.1 371.0 L938.9 371.0 L939.7 371.1 L940.5 371.2 L941.4 371.3 L942.2 371.4 L943.0 371.6 L943.8 371.7 L944.7 371.9 L945.5 372.1 L946.3 372.4 L947.1 372.6 L947.9 372.9 L948.7 373.2 L949.5 373.5 L950.3 373.8 L951.1 374.1 L951.8 374.5 L952.6 374.9 L953.4 375.3 L954.1 375.7 L954.9 376.1 L955.6 376.5 L956.3 377.0 L957.0 377.5 L957.7 378.0 L958.4 378.5 L959.1 379.0 L959.8 379.5 L960.4 380.1 L961.1 380.6 L961.7 381.2 L962.3 381.8 L962.9 382.4 L963.5 383.0 L964.0 383.6 L964.6 384.2 L965.1 384.9 L965.6 385.5 L966.1 386.2 L966.6 386.9 L967.1 387.6 L967.5 388.2 L968.0 388.9 L968.4 389.7 L968.8 390.4 L969.2 391.1 L969.5 391.8 L969.8 392.5 L970.2 393.3 L970.4 394.0 L970.7 394.8 L971.0 395.5 L971.2 396.3 L971.4 397.0 L971.6 397.8 L971.8 398.5 L971.9 399.3 L972.1 400.1 L972.2 400.8 L972.2 401.6 L972.3 402.3 L972.4 403.1 L972.4 403.8 L972.4 404.6 L972.3 405.3 L972.3 406.1 L972.2 406.8 L972.1 407.6 L972.0 408.3 L971.9 409.0 L971.8 409.7 L971.6 410.4 L971.4 411.1 L971.2 411.8 L970.9 412.5 L970.7 413.2 L970.4 413.9 L970.1 414.5 L969.8 415.2 L969.5 415.8 L969.1 416.4 L968.7 417.1 L968.3 417.7 L967.9 418.3 L967.5 418.8 L967.0 419.4 L966.6 420.0 L966.1 420.5 L965.6 421.0 L965.1 421.5 L964.5 422.0 L964.0 422.5 L963.4 423.0 L962.8 423.4 L962.2 423.9 L961.6 424.3 L961.0 424.7 L960.3 425.1 L959.7 425.5 L959.0 425.8 L958.3 426.1 L957.7 426.4 L956.9 426.7 L956.2 427.0 L955.5 427.3 L954.8 427.5 L954.0 427.7 L953.3 427.9 L952.5 428.1 L951.7 428.3 L951.0 428.4 L950.2 428.6 L949.4 428.7 L948.6 428.7 L947.8 428.8 L947.0 428.9 L946.2 428.9 L945.4 428.9 L944.5 428.9 L943.7 428.8 L942.9 428.8 L942.1 428.7 L941.3 428.6 L940.4 428.5 L939.6 428.4 L938.8 428.2 L938.0 428.1 L937.1 427.9 L936.3 427.7 L935.5 427.4 L934.7 427.2 L933.9 426.9 L933.1 426.6 L932.3 426.3 L931.5 426.0 L930.7 425.7 L930.0 425.3 L929.2 424.9 L928.4 424.5 L927.7 424.1 Z" fill="#a8a8a8" fill-rule="evenodd"/>
<path d="M816 372.5 L877.5 380 Q880 372 891.7 351.3 L905 400 L881 405.5 Q878 403.5 870 403.2 L816 398 Z" fill="#a8a8a8"/>
<path d="M814.5 372.3 L878.5 380.3 M815.5 397.5 L880 404.5" fill="none" stroke="#141414" stroke-width="1.7"/>
<path d="M877.1 379.7 L877.2 379.2 L877.3 378.7 L877.3 378.2 L877.4 377.7 L877.5 377.2 L877.6 376.7 L877.7 376.2 L877.8 375.7 L877.9 375.2 L878.1 374.8 L878.2 374.3 L878.3 373.8 L878.4 373.3 L878.6 372.8 L878.7 372.4 L878.9 371.9 L879.0 371.4 L879.2 371.0 L879.3 370.5 L879.5 370.0 L879.7 369.6 L879.8 369.1 L880.0 368.6 L880.2 368.2 L880.4 367.7 L880.6 367.3 L880.8 366.8 L881.0 366.4 L881.2 365.9 L881.4 365.5 L881.6 365.1 L881.8 364.6 L882.1 364.2 L882.3 363.8 L882.5 363.3 L882.8 362.9 L883.0 362.5 L883.2 362.1 L883.5 361.7 L883.7 361.3 L884.0 360.8 L884.3 360.4 L884.5 360.0 L884.8 359.6 L885.1 359.2 L885.3 358.8 L885.6 358.4 L885.9 358.1 L886.2 357.7 L886.5 357.3 L886.8 356.9 L887.1 356.5 L887.4 356.2 L887.7 355.8 L888.0 355.4 L888.4 355.1 L888.7 354.7 L889.0 354.3 L889.3 354.0 L889.7 353.6 L890.0 353.3 L890.4 353.0 L890.7 352.6 L891.0 352.3 L891.4 352.0 L891.8 351.6 L892.1 351.3 L892.5 351.0 L892.9 350.7 L893.2 350.4 L893.6 350.0 L894.0 349.7 L894.4 349.4 L894.7 349.1 L895.1 348.8 L895.5 348.6 L895.9 348.3 L896.3 348.0 L896.7 347.7 L897.1 347.4 L897.5 347.2 L897.9 346.9 L898.4 346.6 L898.8 346.4 L899.2 346.1 L899.6 345.9 L900.1 345.6 L900.5 345.4 L900.9 345.1 L901.4 344.9 L901.8 344.7 L902.2 344.4 L902.7 344.2 L903.1 344.0 L903.6 343.8 L904.0 343.6 L904.5 343.4 L904.9 343.2 L905.4 343.0 L905.9 342.8 L906.3 342.6 L906.8 342.4 L907.3 342.2 L907.8 342.1 L908.2 341.9 L908.7 341.7 L909.2 341.6 L909.7 341.4 L910.2 341.3 L910.7 341.1 L911.1 341.0 L911.6 340.8 L912.1 340.7 L912.6 340.6 L913.1 340.4 L913.6 340.3 L914.1 340.2 L914.6 340.1 L915.1 340.0 L915.7 339.9 L916.2 339.8 L916.7 339.7 L917.2 339.6 L917.7 339.5 L918.2 339.4 L918.7 339.3 L919.3 339.3 L919.8 339.2 L920.3 339.1 L920.8 339.1 L921.4 339.0 L921.9 339.0 L922.4 338.9 L922.9 338.9 L923.5 338.9 L924.0 338.8 L924.5 338.8 L925.1 338.8 L925.6 338.8 L926.2 338.8 L926.7 338.8 L927.2 338.8 L927.8 338.8 L928.3 338.8 L928.9 338.8 L929.4 338.8 L929.9 338.8 L930.5 338.8 L931.0 338.9 L931.6 338.9 L932.1 338.9 L932.7 339.0 L933.2 339.0 L933.8 339.1 L934.3 339.1 L934.9 339.2 L935.4 339.3 L936.0 339.3 L936.5 339.4 L937.1 339.5 L937.6 339.6 L938.2 339.7 L938.7 339.8 L939.3 339.9 L939.8 340.0 L940.4 340.1 L940.9 340.2 L941.5 340.3 L942.0 340.4 L942.6 340.5 L943.1 340.7 L943.7 340.8 L944.2 340.9 L944.8 341.1 L945.3 341.2 L945.9 341.4 L946.4 341.5 L947.0 341.7 L947.5 341.9 L948.1 342.0 L948.6 342.2 L949.2 342.4 L949.7 342.6 L950.3 342.8 L950.8 343.0 L951.3 343.2 L951.9 343.4 L952.4 343.6 L953.0 343.8 L953.5 344.0 L954.0 344.2 L954.6 344.4 L955.1 344.6 L955.6 344.9 L956.2 345.1 L956.7 345.3 L957.2 345.6 L957.8 345.8 L958.3 346.1 L958.8 346.3 L959.3 346.6 L959.9 346.9 L960.4 347.1 L960.9 347.4 L961.4 347.7 L961.9 348.0 L962.5 348.2 L963.0 348.5 L963.5 348.8 L964.0 349.1 L964.5 349.4 L965.0 349.7 L965.5 350.0 L966.0 350.3 L966.5 350.6 L967.0 350.9 L967.5 351.3 L968.0 351.6 L968.5 351.9 L969.0 352.2 L969.5 352.6 L970.0 352.9 L970.4 353.3 L970.9 353.6 L971.4 354.0 L971.9 354.3 L972.3 354.7 L972.8 355.0 L973.3 355.4 L973.7 355.8 L974.2 356.1 L974.7 356.5 L975.1 356.9 L975.6 357.2 L976.0 357.6 L976.5 358.0 L976.9 358.4 L977.4 358.8 L977.8 359.2 L978.3 359.6 L978.7 360.0 L979.1 360.4 L979.5 360.8 L980.0 361.2 L980.4 361.6 L980.8 362.0 L981.2 362.5 L981.6 362.9 L982.1 363.3 L982.5 363.7 L982.9 364.2 L983.3 364.6 L983.7 365.0 L984.1 365.5 L984.5 365.9 L984.8 366.3 L985.2 366.8 L985.6 367.2 L986.0 367.7 L986.4 368.1 L986.7 368.6 L987.1 369.1 L987.5 369.5 L987.8 370.0 L988.2 370.4 L988.5 370.9 L988.9 371.4 L989.2 371.8 L989.5 372.3 L989.9 372.8 L990.2 373.3 L990.5 373.7 L990.9 374.2 L991.2 374.7 L991.5 375.2 L991.8 375.7 L992.1 376.2 L992.4 376.7 L992.7 377.1 L993.0 377.6 L993.3 378.1 L993.6 378.6 L993.9 379.1 L994.2 379.6 L994.5 380.1 L994.7 380.6 L995.0 381.1 L995.3 381.6 L995.5 382.1 L995.8 382.7 L996.0 383.2 L996.3 383.7 L996.5 384.2 L996.8 384.7 L997.0 385.2 L997.2 385.7 L997.5 386.2 L997.7 386.8 L997.9 387.3 L998.1 387.8 L998.3 388.3 L998.5 388.8 L998.7 389.4 L998.9 389.9 L999.1 390.4 L999.3 390.9 L999.5 391.5 L999.6 392.0 L999.8 392.5 L1000.0 393.0 L1000.1 393.6 L1000.3 394.1 L1000.4 394.6 L1000.6 395.1 L1000.7 395.7 L1000.9 396.2 L1001.0 396.7 L1001.1 397.3 L1001.3 397.8 L1001.4 398.3 L1001.5 398.8 L1001.6 399.4 L1001.7 399.9 L1001.8 400.4 L1001.9 401.0 L1002.0 401.5 L1002.1 402.0 L1002.2 402.5 L1002.3 403.1 L1002.3 403.6 L1002.4 404.1 L1002.5 404.7 L1002.5 405.2 L1002.6 405.7 L1002.6 406.2 L1002.7 406.8 L1002.7 407.3 L1002.7 407.8 L1002.8 408.3 L1002.8 408.9 L1002.8 409.4 L1002.8 409.9 L1002.9 410.4 L1002.9 410.9 L1002.9 411.5 L1002.9 412.0 L1002.8 412.5 L1002.8 413.0 L1002.8 413.5 L1002.8 414.0 L1002.8 414.6 L1002.7 415.1 L1002.7 415.6 L1002.7 416.1 L1002.6 416.6 L1002.6 417.1 L1002.5 417.6 L1002.4 418.1 L1002.4 418.6 L1002.3 419.1 L1002.2 419.6 L1002.1 420.1 L1002.1 420.6 L1002.0 421.1 L1001.9 421.6 L1001.8 422.1 L1001.7 422.6 L1001.6 423.1 L1001.5 423.6 L1001.3 424.0 L1001.2 424.5 L1001.1 425.0 L1001.0 425.5 L1000.8 426.0 L1000.7 426.4 L1000.5 426.9 L1000.4 427.4 L1000.2 427.8 L1000.1 428.3 L999.9 428.8 L999.7 429.2 L999.6 429.7 L999.4 430.2 L999.2 430.6 L999.0 431.1 L998.8 431.5 L998.6 432.0 L998.4 432.4 L998.2 432.9 L998.0 433.3 L997.8 433.7 L997.6 434.2 L997.3 434.6 L997.1 435.0 L996.9 435.5 L996.6 435.9 L996.4 436.3 L996.2 436.7 L995.9 437.1 L995.7 437.5 L995.4 438.0 L995.1 438.4 L994.9 438.8 L994.6 439.2 L994.3 439.6 L994.1 440.0 L993.8 440.4 L993.5 440.7 L993.2 441.1 L992.9 441.5 L992.6 441.9 L992.3 442.3 L992.0 442.6 L991.7 443.0 L991.4 443.4 L991.0 443.7 L990.7 444.1 L990.4 444.5 L990.1 444.8 L989.7 445.2 L989.4 445.5 L989.0 445.8 L988.7 446.2 L988.4 446.5 L988.0 446.8 L987.6 447.2 L987.3 447.5 L986.9 447.8 L986.5 448.1 L986.2 448.4 L985.8 448.8 L985.4 449.1 L985.0 449.4 L984.7 449.7 L984.3 450.0 L983.9 450.2 L983.5 450.5 L983.1 450.8 L982.7 451.1 L982.3 451.4 L981.9 451.6 L981.5 451.9 L981.0 452.2 L980.6 452.4 L980.2 452.7 L979.8 452.9 L979.3 453.2 L978.9 453.4 L978.5 453.7 L978.0 453.9 L977.6 454.1 L977.2 454.4 L976.7 454.6 L976.3 454.8 L975.8 455.0 L975.4 455.2 L974.9 455.4 L974.5 455.6 L974.0 455.8 L973.5 456.0 L973.1 456.2 L972.6 456.4 L972.1 456.6 L971.6 456.7 L971.2 456.9 L970.7 457.1 L970.2 457.2 L969.7 457.4 L969.2 457.5 L968.7 457.7 L968.3 457.8 L967.8 458.0 L967.3 458.1 L966.8 458.2 L966.3 458.4 L965.8 458.5 L965.3 458.6 L964.8 458.7 L964.3 458.8 L963.7 458.9 L963.2 459.0 L962.7 459.1 L962.2 459.2 L961.7 459.3 L961.2 459.4 L960.7 459.5 L960.1 459.5 L959.6 459.6 L959.1 459.7 L958.6 459.7 L958.0 459.8 L957.5 459.8 L957.0 459.9 L956.5 459.9 L955.9 459.9 L955.4 460.0 L954.9 460.0 L954.3 460.0 L953.8 460.0 L953.2 460.0 L952.7 460.0 L952.2 460.0 L951.6 460.0 L951.1 460.0 L950.5 460.0 L950.0 460.0 L949.5 460.0 L948.9 460.0 L948.4 459.9 L947.8 459.9 L947.3 459.9 L946.7 459.8 L946.2 459.8 L945.6 459.7 L945.1 459.7 L944.5 459.6 L944.0 459.5 L943.4 459.5 L942.9 459.4 L942.3 459.3 L941.8 459.2 L941.2 459.1 L940.7 459.0 L940.1 458.9 L939.6 458.8 L939.0 458.7 L938.5 458.6 L937.9 458.5 L937.4 458.4 L936.8 458.3 L936.3 458.1 L935.7 458.0 L935.2 457.9 L934.6 457.7 L934.1 457.6 L933.5 457.4 L933.0 457.3 L932.4 457.1 L931.9 456.9 L931.3 456.8 L930.8 456.6 L930.2 456.4 L929.7 456.2 L929.1 456.0 L928.6 455.8 L928.1 455.6 L927.5 455.4 L927.0 455.2 L926.4 455.0 L925.9 454.8 L925.4 454.6 L924.8 454.4 L924.3 454.2 L923.8 453.9 L923.2 453.7 L922.7 453.5 L922.2 453.2 L921.6 453.0 L921.1 452.7 L920.6 452.5 L920.1 452.2 L919.5 451.9 L919.0 451.7 L918.5 451.4 L918.0 451.1 L917.5 450.8 L916.9 450.6 L916.4 450.3 L915.9 450.0 L915.4 449.7 L914.9 449.4 L914.4 449.1 L913.9 448.8 L913.4 448.5 L912.9 448.2 L912.4 447.9 L911.9 447.5 L911.4 447.2 L910.9 446.9 L910.4 446.6 L909.9 446.2 L909.4 445.9 L909.0 445.5 L908.5 445.2 L908.0 444.8 L907.5 444.5 L907.1 444.1 L906.6 443.8 L906.1 443.4 L905.7 443.0 L905.2 442.7 L904.7 442.3 L904.3 441.9 L903.8 441.6 L903.4 441.2 L902.9 440.8 L902.5 440.4 L902.0 440.0 L901.6 439.6 L901.1 439.2 L900.7 438.8 L900.3 438.4 L899.9 438.0 L899.4 437.6 L899.0 437.2 L898.6 436.8 L898.2 436.3 L897.8 435.9 L897.3 435.5 L896.9 435.1 L896.5 434.6 L896.1 434.2 L895.7 433.8 L895.3 433.3 L894.9 432.9 L894.6 432.5 L894.2 432.0 L893.8 431.6 L893.4 431.1 L893.0 430.7 L892.7 430.2 L892.3 429.7 L891.9 429.3 L891.6 428.8 L891.2 428.4 L890.9 427.9 L890.5 427.4 L890.2 427.0 L889.9 426.5 L889.5 426.0 L889.2 425.5 L888.9 425.1 L888.5 424.6 L888.2 424.1 L887.9 423.6 L887.6 423.1 L887.3 422.6 L887.0 422.1 L886.7 421.7 L886.4 421.2 L886.1 420.7 L885.8 420.2 L885.5 419.7 L885.2 419.2 L884.9 418.7 L884.7 418.2 L884.4 417.7 L884.1 417.2 L883.9 416.7 L883.6 416.1 L883.4 415.6 L883.1 415.1 L882.9 414.6 L882.6 414.1 L882.4 413.6 L882.2 413.1 L881.9 412.6 L881.7 412.0 L881.5 411.5 L881.3 411.0 L881.1 410.5 L880.9 410.0 L880.7 409.4 L880.5 408.9 L880.3 408.4 L880.1 407.9 L879.9 407.3 L879.8 406.8 L879.6 406.3 L879.4 405.8 L879.3 405.2 L879.1 404.7" fill="none" stroke="#141414" stroke-width="1.7"/>
<path d="M926.9 423.7 L926.2 423.3 L925.5 422.8 L924.8 422.3 L924.1 421.8 L923.4 421.3 L922.7 420.8 L922.0 420.3 L921.4 419.7 L920.7 419.2 L920.1 418.6 L919.5 418.0 L918.9 417.4 L918.3 416.8 L917.8 416.2 L917.2 415.6 L916.7 414.9 L916.2 414.3 L915.7 413.6 L915.2 412.9 L914.7 412.2 L914.3 411.6 L913.8 410.9 L913.4 410.1 L913.0 409.4 L912.6 408.7 L912.3 408.0 L912.0 407.3 L911.6 406.5 L911.4 405.8 L911.1 405.0 L910.8 404.3 L910.6 403.5 L910.4 402.8 L910.2 402.0 L910.0 401.3 L909.9 400.5 L909.7 399.7 L909.6 399.0 L909.6 398.2 L909.5 397.5 L909.4 396.7 L909.4 396.0 L909.4 395.2 L909.5 394.5 L909.5 393.7 L909.6 393.0 L909.7 392.2 L909.8 391.5 L909.9 390.8 L910.0 390.1 L910.2 389.4 L910.4 388.7 L910.6 388.0 L910.9 387.3 L911.1 386.6 L911.4 385.9 L911.7 385.3 L912.0 384.6 L912.3 384.0 L912.7 383.4 L913.1 382.7 L913.5 382.1 L913.9 381.5 L914.3 381.0 L914.8 380.4 L915.2 379.8 L915.7 379.3 L916.2 378.8 L916.7 378.3 L917.3 377.8 L917.8 377.3 L918.4 376.8 L919.0 376.4 L919.6 375.9 L920.2 375.5 L920.8 375.1 L921.5 374.7 L922.1 374.3 L922.8 374.0 L923.5 373.7 L924.1 373.4 L924.9 373.1 L925.6 372.8 L926.3 372.5 L927.0 372.3 L927.8 372.1 L928.5 371.9 L929.3 371.7 L930.1 371.5 L930.8 371.4 L931.6 371.2 L932.4 371.1 L933.2 371.1 L934.0 371.0 L934.8 370.9 L935.6 370.9 L936.4 370.9 L937.3 370.9 L938.1 371.0 L938.9 371.0 L939.7 371.1 L940.5 371.2 L941.4 371.3 L942.2 371.4 L943.0 371.6 L943.8 371.7 L944.7 371.9 L945.5 372.1 L946.3 372.4 L947.1 372.6 L947.9 372.9 L948.7 373.2 L949.5 373.5 L950.3 373.8 L951.1 374.1 L951.8 374.5 L952.6 374.9 L953.4 375.3 L954.1 375.7 L954.9 376.1 L955.6 376.5 L956.3 377.0 L957.0 377.5 L957.7 378.0 L958.4 378.5 L959.1 379.0 L959.8 379.5 L960.4 380.1 L961.1 380.6 L961.7 381.2 L962.3 381.8 L962.9 382.4 L963.5 383.0 L964.0 383.6 L964.6 384.2 L965.1 384.9 L965.6 385.5 L966.1 386.2 L966.6 386.9 L967.1 387.6 L967.5 388.2 L968.0 388.9 L968.4 389.7 L968.8 390.4 L969.2 391.1 L969.5 391.8 L969.8 392.5 L970.2 393.3 L970.4 394.0 L970.7 394.8 L971.0 395.5 L971.2 396.3 L971.4 397.0 L971.6 397.8 L971.8 398.5 L971.9 399.3 L972.1 400.1 L972.2 400.8 L972.2 401.6 L972.3 402.3 L972.4 403.1 L972.4 403.8 L972.4 404.6 L972.3 405.3 L972.3 406.1 L972.2 406.8 L972.1 407.6 L972.0 408.3 L971.9 409.0 L971.8 409.7 L971.6 410.4 L971.4 411.1 L971.2 411.8 L970.9 412.5 L970.7 413.2 L970.4 413.9 L970.1 414.5 L969.8 415.2 L969.5 415.8 L969.1 416.4 L968.7 417.1 L968.3 417.7 L967.9 418.3 L967.5 418.8 L967.0 419.4 L966.6 420.0 L966.1 420.5 L965.6 421.0 L965.1 421.5 L964.5 422.0 L964.0 422.5 L963.4 423.0 L962.8 423.4 L962.2 423.9 L961.6 424.3 L961.0 424.7 L960.3 425.1 L959.7 425.5 L959.0 425.8 L958.3 426.1 L957.7 426.4 L956.9 426.7 L956.2 427.0 L955.5 427.3 L954.8 427.5 L954.0 427.7 L953.3 427.9 L952.5 428.1 L951.7 428.3 L951.0 428.4 L950.2 428.6 L949.4 428.7 L948.6 428.7 L947.8 428.8 L947.0 428.9 L946.2 428.9 L945.4 428.9 L944.5 428.9 L943.7 428.8 L942.9 428.8 L942.1 428.7 L941.3 428.6 L940.4 428.5 L939.6 428.4 L938.8 428.2 L938.0 428.1 L937.1 427.9 L936.3 427.7 L935.5 427.4 L934.7 427.2 L933.9 426.9 L933.1 426.6 L932.3 426.3 L931.5 426.0 L930.7 425.7 L930.0 425.3 L929.2 424.9 L928.4 424.5 L927.7 424.1 Z" fill="url(#inng3)" stroke="#141414" stroke-width="1.7"/>
<path d="M629.5 334.9 L758 349.3 M1023.4 378.4 L1083.8 385.4" stroke="#e8685a" stroke-width="1.9"/>
<path d="M596.0 267.0 C597.3 265.2 601.8 258.8 604.0 256.0 C606.2 253.2 605.9 252.7 609.0 250.0 C612.1 247.3 617.2 242.9 622.4 240.0 C627.6 237.1 632.8 235.1 640.0 232.6 C647.2 230.1 658.2 226.4 665.7 225.1 C673.2 223.8 678.6 224.4 685.0 224.8 C691.4 225.2 697.9 226.1 704.3 227.4 C710.7 228.7 716.6 230.6 723.5 232.6 C730.4 234.6 741.8 238.4 745.4 239.6" fill="none" stroke="#e0307a" stroke-width="1.9" stroke-dasharray="6 3 2 3"/>
<path d="M954.2 311.5 C957.2 312.3 966.0 314.0 972.0 316.5 C978.0 319.0 984.4 322.6 990.0 326.3 C995.6 330.1 1000.7 333.9 1005.4 339.0 C1010.1 344.1 1015.3 351.4 1018.3 357.0 C1021.3 362.6 1022.5 367.3 1023.4 372.5 C1024.2 377.7 1024.2 382.9 1023.4 388.0 C1022.5 393.1 1020.1 398.4 1018.3 403.4 C1016.5 408.4 1013.5 415.6 1012.6 418.0" fill="none" stroke="#e0307a" stroke-width="1.9" stroke-dasharray="6 3 2 3"/>
<path d="M680.1 115.8 L710.1 345 M731.2 122.6 L746.5 240 M659.7 149.8 L675 151.6 M745 159.6 L803.5 165.8" stroke="#ffff00" stroke-width="1.8" fill="none"/>
<path d="M685 152.8 L674.5 148.3 L673.8 154.9 Z M735.5 158.6 L746.3 156 L745.6 162.6 Z" fill="#ffff00"/>
<text x="0" y="0" font-family="Liberation Sans, sans-serif" font-size="15.5" fill="#ffff00" transform="translate(810.5 172.8) rotate(6)" textLength="47" lengthAdjust="spacingAndGlyphs">20 mm</text>
<path d="M746.5 240 L954.2 311.5" stroke="#00ff00" stroke-width="1.9" fill="none"/>
<path d="M746.5 240.3 C750.6 243.5 763.7 253.3 771.3 259.2 C778.9 265.1 785.9 270.0 792.2 275.9 C798.5 281.8 804.0 288.4 808.9 294.7 C813.8 301.0 817.9 307.2 821.4 313.5 C824.9 319.8 827.7 327.1 829.8 332.3 C831.9 337.5 833.2 342.7 833.9 344.8 L889.5 352.5" stroke="#00ff00" stroke-width="1.9" fill="none" stroke-linejoin="round"/>
<path d="M903.3 334.2 C904.4 333.0 907.0 329.7 910.0 327.0 C913.0 324.3 916.6 320.5 921.0 318.2 C925.4 315.9 931.0 314.4 936.5 313.3 C942.0 312.2 951.2 311.8 954.2 311.5" stroke="#00ff00" stroke-width="1.9" fill="none"/>
<circle cx="746.5" cy="240.3" r="3" fill="#00ff00"/><circle cx="954.2" cy="311.5" r="3.2" fill="#00ff00"/><circle cx="833.9" cy="344.8" r="2" fill="#00ff00"/><circle cx="710" cy="345" r="3" fill="#00ff00"/>
<rect x="605.1" y="212.3" width="7.5" height="1.9" fill="#ff2200"/><rect x="605.1" y="215.4" width="7.5" height="1.9" fill="#ff2200"/><text x="615.5" y="222.3" font-family="Liberation Sans, sans-serif" font-size="14.5" fill="#ff2200" stroke="#ff2200" stroke-width="0.7">7</text>
<rect x="812" y="270.5" width="7.5" height="1.9" fill="#ff2200"/><rect x="812" y="273.6" width="7.5" height="1.9" fill="#ff2200"/><text x="823" y="280.2" font-family="Liberation Sans, sans-serif" font-size="14" fill="#ff2200" stroke="#ff2200" stroke-width="0.7">7</text>
<rect x="890.2" y="298.4" width="7.5" height="1.9" fill="#ff2200"/><rect x="890.2" y="301.5" width="7.5" height="1.9" fill="#ff2200"/><text x="900.8" y="308.4" font-family="Liberation Sans, sans-serif" font-size="14" fill="#ff2200" stroke="#ff2200" stroke-width="0.7">8</text>
<rect x="920" y="297" width="2.2" height="10" fill="#ff2200"/>
<text x="927.8" y="309" font-family="Liberation Sans, sans-serif" font-size="14" fill="#ff2200" stroke="#ff2200" stroke-width="0.7" textLength="16" lengthAdjust="spacingAndGlyphs">11</text>
<rect x="1040" y="377.7" width="7.5" height="1.9" fill="#ff2200"/><rect x="1040" y="380.8" width="7.5" height="1.9" fill="#ff2200"/><text x="1049.8" y="386.8" font-family="Liberation Sans, sans-serif" font-size="14" fill="#ff2200" stroke="#ff2200" stroke-width="0.7">8</text>
<path d="M917.5 323 Q918 315 926 313.5" stroke="#ff2200" stroke-width="2" fill="none"/><path d="M916 320 L921 316 L917 324 Z" fill="#ff2200"/>
<rect x="928.5" y="371" width="1.8" height="2" fill="#ff2200"/><rect x="937" y="373.5" width="7" height="1.8" fill="#ff2200"/><rect x="940" y="371" width="1.8" height="3" fill="#ff2200"/><rect x="946" y="373.5" width="4" height="1.6" fill="#ff2200"/>
<text x="472.6" y="321.1" font-family="Liberation Sans, sans-serif" font-size="24" fill="#cccc3e" opacity="0.64" textLength="186.6" lengthAdjust="spacingAndGlyphs">Mechnexus.com</text>
</g>
</svg></body></html>
